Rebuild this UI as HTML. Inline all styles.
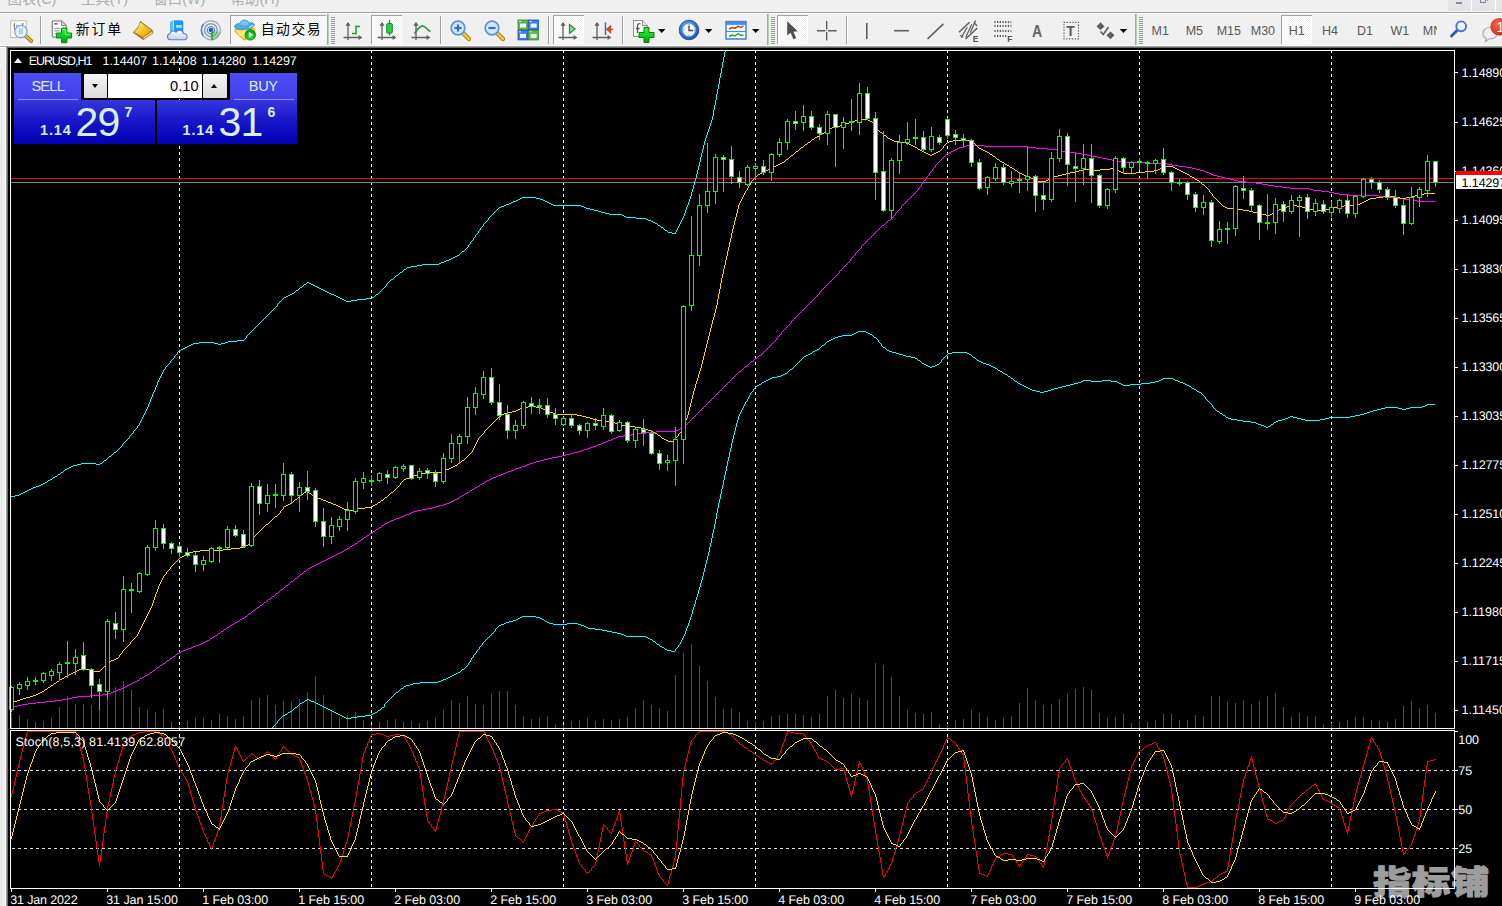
<!DOCTYPE html>
<html lang="zh"><head><meta charset="utf-8"><title>EURUSD,H1</title>
<style>
html,body{margin:0;padding:0}
body{width:1502px;height:906px;overflow:hidden;background:#f0f0f0;position:relative;font-family:"Liberation Sans","Noto Sans CJK SC",sans-serif}
#menu{position:absolute;left:0;top:0;width:1502px;height:12px;overflow:hidden;background:#f0f0f0;color:#adadad;font-size:14.4px;line-height:16px}
#menu span{position:absolute;top:-8.9px;white-space:nowrap}
#menu .wb{position:absolute;top:0;height:11px;background:#e5e5e5}
#mline{position:absolute;left:0;top:12px;width:1502px;height:1px;background:#a0a0a0}
#mline2{position:absolute;left:0;top:13px;width:1502px;height:1px;background:#fff}
#tb{position:absolute;left:0;top:0}
.tl{position:absolute;top:21.6px;font-size:13.8px;line-height:17px;letter-spacing:0.7px;color:#000;white-space:nowrap}
.tf{position:absolute;top:23.8px;font-size:12.5px;line-height:15px;color:#585858;white-space:nowrap;text-align:center;width:40px;margin-left:-20px}
#tp{position:absolute;left:0;top:0}
#tp .tri{position:absolute;left:14px;top:58px;width:0;height:0;border-left:4.6px solid transparent;border-right:4.6px solid transparent;border-bottom:5.2px solid #fff}
#tp .bs{position:absolute;top:73px;height:27px;background:linear-gradient(#4d4df6,#4040ea)}
#tp .bs span{position:absolute;top:4.2px;font-size:14.6px;line-height:18px;color:#d9efe2;letter-spacing:-0.75px;font-weight:300}
#tp .bs i{position:absolute;top:26px;height:1px;background:#8f8ff5}
#tp .vol{position:absolute;left:83px;top:73px;width:145px;height:26px;background:#000}
#tp .vb{position:absolute;top:1px;width:23px;height:24px;background:linear-gradient(#f4f4f4,#dcdcdc);border-radius:1px}
#tp .vb b{position:absolute;left:8px;top:10px;width:0;height:0;border-left:3.5px solid transparent;border-right:3.5px solid transparent}
#tp .vb b.dn{border-top:4px solid #000}
#tp .vb b.up{border-bottom:4px solid #000}
#tp .vf{position:absolute;left:25px;top:1px;width:94px;height:24px;background:#fff;color:#000;font-size:14.6px;line-height:24px;text-align:right;box-sizing:border-box;padding-right:3.5px}
#tp .pr{position:absolute;top:100px;height:44px;background:linear-gradient(#3636de,#1c1ccc 40%,#0a0abf 75%,#0303b3);color:#d9efe2}
#tp .pr span{position:absolute;white-space:nowrap}
#tp .pr .sm{top:22.3px;font-size:14.4px;font-weight:bold;line-height:16px;letter-spacing:0.9px}
#tp .pr .bg{top:-0.3px;font-size:41px;line-height:44px;letter-spacing:-1px}
#tp .pr .su{top:4px;font-size:14px;font-weight:bold;line-height:16px}
</style></head><body>
<div id="menu"><span style="left:7.6px">图表(C)</span><span style="left:81px">工具(T)</span><span style="left:153.4px">窗口(W)</span><span style="left:230.7px">帮助(H)</span>
<div class="wb" style="left:1448px;width:54px;background:#fcfcfc"></div><div class="wb" style="left:1448px;width:23px"><div style="position:absolute;left:8px;top:2px;width:6px;height:2px;background:#7a8eab"></div></div>
<div class="wb" style="left:1472px;width:23px"><div style="position:absolute;left:8px;top:-4px;width:4px;height:5px;border:1.5px solid #7489ab;background:#dfe4ec"></div><div style="position:absolute;left:15px;top:0;width:1px;height:1px;background:#7489ab"></div></div>
<div class="wb" style="left:1496px;width:6px"></div>
</div><div id="mline"></div><div id="mline2"></div>
<svg id="chart" width="1502" height="906" viewBox="0 0 1502 906" style="position:absolute;left:0;top:0" font-family='"Liberation Sans","Noto Sans CJK SC",sans-serif' text-rendering="geometricPrecision">
<defs>
<clipPath id="cm"><rect x="11" y="51" width="1443" height="677"/></clipPath>
<clipPath id="cs"><rect x="11" y="731" width="1443" height="157"/></clipPath>
<clipPath id="ca"><rect x="1455" y="48" width="47" height="858"/></clipPath>
</defs>
<g shape-rendering="crispEdges">
<rect x="5" y="47" width="1" height="859" fill="#fff"/>
<rect x="0" y="47" width="6" height="1" fill="#fff"/>
<rect x="1" y="68" width="1" height="838" fill="#cfe6cf"/>
<rect x="0" y="45" width="1502" height="1" fill="#fbfbfb"/>
<rect x="0" y="46" width="1502" height="1" fill="#a6a6a6"/>
<rect x="6" y="46" width="1496" height="860" fill="#a0a0a0"/>
<rect x="7" y="47" width="1495" height="859" fill="#696969"/>
<rect x="8" y="48" width="1494" height="858" fill="#000"/>
<path d="M179.5 50V889 M371.5 50V889 M563.5 50V889 M755.5 50V889 M947.5 50V889 M1139.5 50V889 M1331.5 50V889" stroke="#fff" stroke-width="1" stroke-dasharray="3 3" fill="none"/>
<path d="M11 178.5H1454" stroke="#ff0000" stroke-width="1"/>
<path d="M11 182.5H1454" stroke="#778899" stroke-width="1"/>
<path d="M11.5 713V728 M19.5 715V728 M27.5 719V728 M35.5 722V728 M43.5 721V728 M51.5 718V728 M59.5 707V728 M67.5 696V728 M75.5 704V728 M83.5 704V728 M91.5 705V728 M99.5 709V728 M107.5 692V728 M115.5 687V728 M123.5 681V728 M131.5 690V728 M139.5 707V728 M147.5 710V728 M155.5 712V728 M163.5 709V728 M171.5 722V728 M179.5 726V728 M187.5 721V728 M195.5 718V728 M203.5 718V728 M211.5 720V728 M219.5 714V728 M227.5 716V728 M235.5 719V728 M243.5 716V728 M251.5 700V728 M259.5 698V728 M267.5 695V728 M275.5 705V728 M283.5 701V728 M291.5 702V728 M299.5 699V728 M307.5 692V728 M315.5 676V728 M323.5 695V728 M331.5 711V728 M339.5 717V728 M347.5 715V728 M355.5 712V728 M363.5 720V728 M371.5 725V728 M379.5 722V728 M387.5 720V728 M395.5 719V728 M403.5 722V728 M411.5 721V728 M419.5 723V728 M427.5 721V728 M435.5 718V728 M443.5 710V728 M451.5 700V728 M459.5 703V728 M467.5 696V728 M475.5 704V728 M483.5 705V728 M491.5 694V728 M499.5 691V728 M507.5 691V728 M515.5 705V728 M523.5 716V728 M531.5 719V728 M539.5 718V728 M547.5 716V728 M555.5 724V728 M563.5 725V728 M571.5 721V728 M579.5 720V728 M587.5 718V728 M595.5 721V728 M603.5 719V728 M611.5 720V728 M619.5 719V728 M627.5 717V728 M635.5 708V728 M643.5 700V728 M651.5 705V728 M659.5 708V728 M667.5 711V728 M675.5 675V728 M683.5 653V728 M691.5 644V728 M699.5 666V728 M707.5 681V728 M715.5 697V728 M723.5 709V728 M731.5 708V728 M739.5 712V728 M747.5 721V728 M755.5 722V728 M763.5 721V728 M771.5 716V728 M779.5 715V728 M787.5 714V728 M795.5 714V728 M803.5 715V728 M811.5 717V728 M819.5 714V728 M827.5 696V728 M835.5 690V728 M843.5 698V728 M851.5 694V728 M859.5 698V728 M867.5 700V728 M875.5 663V728 M883.5 665V728 M891.5 677V728 M899.5 696V728 M907.5 710V728 M915.5 713V728 M923.5 714V728 M931.5 712V728 M939.5 724V728 M947.5 724V728 M955.5 720V728 M963.5 719V728 M971.5 710V728 M979.5 713V728 M987.5 717V728 M995.5 720V728 M1003.5 718V728 M1011.5 716V728 M1019.5 703V728 M1027.5 688V728 M1035.5 700V728 M1043.5 705V728 M1051.5 704V728 M1059.5 699V728 M1067.5 694V728 M1075.5 689V728 M1083.5 687V728 M1091.5 690V728 M1099.5 713V728 M1107.5 718V728 M1115.5 717V728 M1123.5 714V728 M1131.5 723V728 M1139.5 721V728 M1147.5 722V728 M1155.5 720V728 M1163.5 714V728 M1171.5 714V728 M1179.5 720V728 M1187.5 720V728 M1195.5 715V728 M1203.5 716V728 M1211.5 696V728 M1219.5 696V728 M1227.5 702V728 M1235.5 703V728 M1243.5 700V728 M1251.5 704V728 M1259.5 701V728 M1267.5 696V728 M1275.5 693V728 M1283.5 707V728 M1291.5 717V728 M1299.5 713V728 M1307.5 716V728 M1315.5 716V728 M1323.5 724V728 M1331.5 723V728 M1339.5 722V728 M1347.5 720V728 M1355.5 717V728 M1363.5 717V728 M1371.5 720V728 M1379.5 721V728 M1387.5 722V728 M1395.5 719V728 M1403.5 706V728 M1411.5 701V728 M1419.5 708V728 M1427.5 705V728 M1435.5 713V728" stroke="#ff0000" stroke-width="1" fill="none"/>
<g clip-path="url(#cm)" fill="none" stroke-width="1">
<path d="M122.5 444v2M129.5 436v2M133.5 431v2M137.5 426v2M139.5 423v2M140.5 421v2M141.5 419v2M142.5 417v2M143.5 415v2M144.5 413v2M145.5 411v2M146.5 409v2M147.5 407v2M148.5 404v3M149.5 402v2M150.5 399v3M151.5 397v2M152.5 394v3M153.5 392v2M154.5 390v2M155.5 387v3M156.5 385v2M157.5 382v3M158.5 380v2M159.5 378v2M160.5 376v2M161.5 374v2M162.5 372v2M163.5 370v2M165.5 367v2M170.5 361v2M174.5 356v2M177.5 352v2M246.5 336v2M277.5 304v2M386.5 284v2M468.5 245v2M470.5 242v2M473.5 238v2M475.5 235v2M478.5 231v2M480.5 228v2M483.5 224v2M488.5 218v2M675.5 232v2M676.5 230v2M677.5 228v2M678.5 226v2M679.5 224v2M680.5 222v2M681.5 220v2M682.5 218v2M683.5 216v2M684.5 213v3M685.5 210v3M686.5 207v3M687.5 205v2M688.5 202v3M689.5 199v3M690.5 196v3M691.5 192v4M692.5 189v3M693.5 185v4M694.5 181v4M695.5 178v3M696.5 174v4M697.5 170v4M698.5 166v4M699.5 162v4M700.5 157v5M701.5 153v4M702.5 149v4M703.5 145v4M704.5 141v4M705.5 138v3M706.5 135v3M707.5 132v3M708.5 129v3M709.5 126v3M710.5 123v3M711.5 120v3M712.5 116v4M713.5 110v6M714.5 105v5M715.5 100v5M716.5 94v6M717.5 89v5M718.5 84v5M719.5 78v6M720.5 73v5M721.5 68v5M722.5 62v6M723.5 57v5M724.5 52v5M725 51.5h1M522 197.5h14M520 198.5h2M536 198.5h4M518 199.5h2M540 199.5h3M516 200.5h2M543 200.5h2M513 201.5h3M545 201.5h2M511 202.5h2M547 202.5h2M509 203.5h2M549 203.5h2M506 204.5h3M551 204.5h2M504 205.5h2M553 205.5h28M501 206.5h3M581 206.5h3M499 207.5h2M584 207.5h2M498 208.5h1M586 208.5h4M497 209.5h1M590 209.5h4M496 210.5h1M594 210.5h4M495 211.5h1M598 211.5h3M494 212.5h1M601 212.5h4M493 213.5h1M605 213.5h4M492 214.5h1M609 214.5h13M491 215.5h1M622 215.5h2M490 216.5h1M624 216.5h2M489 217.5h1M626 217.5h10M636 218.5h10M646 219.5h2M487 220.5h1M648 220.5h3M486 221.5h1M651 221.5h2M485 222.5h1M653 222.5h2M484 223.5h1M655 223.5h2M657 224.5h1M658 225.5h2M482 226.5h1M660 226.5h1M481 227.5h1M661 227.5h2M663 228.5h1M664 229.5h1M479 230.5h1M665 230.5h2M667 231.5h1M668 232.5h4M477 233.5h1M672 233.5h3M476 234.5h1M474 237.5h1M472 240.5h1M471 241.5h1M469 244.5h1M467 247.5h1M466 248.5h1M465 249.5h1M464 250.5h1M462 251.5h2M461 252.5h1M460 253.5h1M459 254.5h1M457 255.5h2M455 256.5h2M453 257.5h2M451 258.5h2M449 259.5h2M446 260.5h3M444 261.5h2M441 262.5h3M439 263.5h2M422 264.5h17M417 265.5h5M411 266.5h6M407 267.5h4M406 268.5h1M404 269.5h2M403 270.5h1M402 271.5h1M400 272.5h2M399 273.5h1M398 274.5h1M396 275.5h2M395 276.5h1M394 277.5h1M393 278.5h1M391 279.5h2M390 280.5h1M389 281.5h1M307 282.5h2M388 282.5h1M306 283.5h1M309 283.5h2M387 283.5h1M304 284.5h2M311 284.5h2M303 285.5h1M313 285.5h2M302 286.5h1M315 286.5h2M385 286.5h1M300 287.5h2M317 287.5h2M384 287.5h1M299 288.5h1M319 288.5h2M383 288.5h1M298 289.5h1M321 289.5h2M382 289.5h1M296 290.5h2M323 290.5h2M381 290.5h1M295 291.5h1M325 291.5h2M380 291.5h1M294 292.5h1M327 292.5h2M379 292.5h1M292 293.5h2M329 293.5h2M378 293.5h1M290 294.5h2M331 294.5h3M376 294.5h2M288 295.5h2M334 295.5h2M375 295.5h1M286 296.5h2M336 296.5h2M374 296.5h1M284 297.5h2M338 297.5h2M372 297.5h2M283 298.5h1M340 298.5h2M366 298.5h6M282 299.5h1M342 299.5h2M357 299.5h9M281 300.5h1M344 300.5h2M351 300.5h6M280 301.5h1M346 301.5h5M279 302.5h1M278 303.5h1M276 306.5h1M275 307.5h1M274 308.5h1M273 309.5h1M272 310.5h1M271 311.5h1M270 312.5h1M269 313.5h1M268 314.5h1M267 315.5h1M266 316.5h1M265 317.5h1M264 318.5h1M263 319.5h1M262 320.5h1M261 321.5h1M260 322.5h1M259 323.5h1M258 324.5h1M257 325.5h1M256 326.5h1M255 327.5h1M254 328.5h1M253 329.5h1M252 330.5h1M251 331.5h1M250 332.5h1M249 333.5h1M248 334.5h1M247 335.5h1M245 338.5h1M244 339.5h1M237 340.5h7M228 341.5h9M199 342.5h15M225 342.5h3M193 343.5h6M214 343.5h4M221 343.5h4M191 344.5h2M218 344.5h3M189 345.5h2M187 346.5h2M185 347.5h2M183 348.5h2M181 349.5h2M179 350.5h2M178 351.5h1M176 354.5h1M175 355.5h1M173 358.5h1M172 359.5h1M171 360.5h1M169 363.5h1M168 364.5h1M167 365.5h1M166 366.5h1M164 369.5h1M138 425.5h1M136 428.5h1M135 429.5h1M134 430.5h1M132 433.5h1M131 434.5h1M130 435.5h1M128 438.5h1M127 439.5h1M126 440.5h1M125 441.5h1M124 442.5h1M123 443.5h1M121 446.5h1M120 447.5h1M119 448.5h1M118 449.5h1M117 450.5h1M116 451.5h1M114 452.5h2M113 453.5h1M112 454.5h1M111 455.5h1M109 456.5h2M108 457.5h1M107 458.5h1M106 459.5h1M104 460.5h2M103 461.5h1M102 462.5h1M81 463.5h15M100 463.5h2M77 464.5h4M96 464.5h4M73 465.5h4M71 466.5h2M69 467.5h2M67 468.5h2M65 469.5h2M64 470.5h1M63 471.5h1M61 472.5h2M60 473.5h1M58 474.5h2M57 475.5h1M55 476.5h2M53 477.5h2M52 478.5h1M50 479.5h2M48 480.5h2M47 481.5h1M45 482.5h2M43 483.5h2M41 484.5h2M39 485.5h2M36 486.5h3M33 487.5h3M31 488.5h2M29 489.5h2M27 490.5h2M25 491.5h2M23 492.5h2M21 493.5h2M19 494.5h2M15 495.5h4M11 496.5h4M277.5 721v2M384.5 704v3M468.5 663v2M470.5 660v2M471.5 658v2M473.5 655v2M476.5 651v2M479.5 647v2M482.5 643v2M495.5 629v2M675.5 649v2M678.5 645v2M680.5 642v2M681.5 640v2M682.5 638v2M683.5 636v2M684.5 634v2M685.5 631v3M686.5 628v3M687.5 626v2M688.5 623v3M689.5 620v3M690.5 617v3M691.5 614v3M692.5 610v4M693.5 607v3M694.5 604v3M695.5 600v4M696.5 597v3M697.5 594v3M698.5 590v4M699.5 587v3M700.5 583v4M701.5 580v3M702.5 576v4M703.5 572v4M704.5 568v4M705.5 564v4M706.5 560v4M707.5 556v4M708.5 552v4M709.5 547v5M710.5 543v4M711.5 538v5M712.5 533v5M713.5 529v4M714.5 524v5M715.5 519v5M716.5 513v6M717.5 508v5M718.5 503v5M719.5 499v4M720.5 494v5M721.5 489v5M722.5 485v4M723.5 480v5M724.5 475v5M725.5 471v4M726.5 466v5M727.5 461v5M728.5 457v4M729.5 452v5M730.5 448v4M731.5 443v5M732.5 439v4M733.5 435v4M734.5 431v4M735.5 427v4M736.5 423v4M737.5 420v3M738.5 416v4M739.5 414v2M740.5 412v2M741.5 410v2M742.5 408v2M743.5 406v2M744.5 404v2M745.5 402v2M747.5 399v2M748.5 397v2M749.5 395v2M750.5 393v2M753.5 389v2M878.5 340v2M881.5 344v2M941.5 360v2M1205.5 397v2M1212.5 405v2M858 331.5h8M856 332.5h2M866 332.5h2M854 333.5h2M868 333.5h2M852 334.5h2M870 334.5h2M842 335.5h10M872 335.5h1M838 336.5h4M873 336.5h1M835 337.5h3M874 337.5h2M833 338.5h2M876 338.5h1M831 339.5h2M877 339.5h1M829 340.5h2M827 341.5h2M826 342.5h1M879 342.5h1M825 343.5h1M880 343.5h1M824 344.5h1M822 345.5h2M821 346.5h1M882 346.5h1M820 347.5h1M883 347.5h2M819 348.5h1M885 348.5h1M817 349.5h2M886 349.5h1M815 350.5h2M887 350.5h2M813 351.5h2M889 351.5h3M812 352.5h1M892 352.5h4M952 352.5h15M810 353.5h2M896 353.5h3M948 353.5h4M967 353.5h2M808 354.5h2M899 354.5h4M947 354.5h1M969 354.5h2M806 355.5h2M903 355.5h3M946 355.5h1M971 355.5h1M804 356.5h2M906 356.5h5M945 356.5h1M972 356.5h1M803 357.5h1M911 357.5h4M944 357.5h1M973 357.5h2M802 358.5h1M915 358.5h2M943 358.5h1M975 358.5h1M801 359.5h1M917 359.5h1M942 359.5h1M976 359.5h1M800 360.5h1M918 360.5h2M977 360.5h2M799 361.5h1M920 361.5h1M979 361.5h2M798 362.5h1M921 362.5h1M940 362.5h1M981 362.5h2M797 363.5h1M922 363.5h2M939 363.5h1M983 363.5h3M796 364.5h1M924 364.5h2M937 364.5h2M986 364.5h3M795 365.5h1M926 365.5h2M935 365.5h2M989 365.5h2M794 366.5h1M928 366.5h2M932 366.5h3M991 366.5h2M793 367.5h1M930 367.5h2M993 367.5h2M792 368.5h1M995 368.5h2M790 369.5h2M997 369.5h1M789 370.5h1M998 370.5h2M788 371.5h1M1000 371.5h2M787 372.5h1M1002 372.5h1M785 373.5h2M1003 373.5h2M783 374.5h2M1005 374.5h2M781 375.5h2M1007 375.5h1M777 376.5h4M1008 376.5h2M772 377.5h5M1010 377.5h1M770 378.5h2M1011 378.5h2M1163 378.5h10M768 379.5h2M1013 379.5h1M1161 379.5h2M1173 379.5h2M766 380.5h2M1014 380.5h1M1083 380.5h8M1102 380.5h9M1159 380.5h2M1175 380.5h3M764 381.5h2M1015 381.5h2M1081 381.5h2M1091 381.5h11M1111 381.5h6M1155 381.5h4M1178 381.5h2M762 382.5h2M1017 382.5h1M1078 382.5h3M1117 382.5h2M1150 382.5h5M1180 382.5h3M761 383.5h1M1018 383.5h2M1074 383.5h4M1119 383.5h2M1141 383.5h9M1183 383.5h2M759 384.5h2M1020 384.5h2M1070 384.5h4M1121 384.5h2M1130 384.5h11M1185 384.5h2M757 385.5h2M1022 385.5h2M1066 385.5h4M1123 385.5h7M1187 385.5h2M756 386.5h1M1024 386.5h2M1062 386.5h4M1189 386.5h2M755 387.5h1M1026 387.5h2M1058 387.5h4M1191 387.5h1M754 388.5h1M1028 388.5h2M1054 388.5h4M1192 388.5h2M1030 389.5h2M1051 389.5h3M1194 389.5h2M1032 390.5h4M1048 390.5h3M1196 390.5h1M752 391.5h1M1036 391.5h4M1044 391.5h4M1197 391.5h2M751 392.5h1M1040 392.5h4M1199 392.5h2M1201 393.5h1M1202 394.5h1M1203 395.5h1M1204 396.5h1M1206 399.5h1M1207 400.5h1M746 401.5h1M1208 401.5h1M1209 402.5h1M1210 403.5h1M1211 404.5h1M1427 404.5h8M1425 405.5h2M1422 406.5h3M1213 407.5h1M1385 407.5h13M1410 407.5h12M1214 408.5h1M1381 408.5h4M1398 408.5h4M1406 408.5h4M1215 409.5h1M1377 409.5h4M1402 409.5h4M1216 410.5h1M1373 410.5h4M1217 411.5h2M1370 411.5h3M1219 412.5h1M1367 412.5h3M1220 413.5h2M1364 413.5h3M1222 414.5h1M1360 414.5h4M1223 415.5h2M1355 415.5h5M1225 416.5h1M1290 416.5h3M1350 416.5h5M1226 417.5h2M1288 417.5h2M1293 417.5h4M1329 417.5h21M1228 418.5h3M1285 418.5h3M1297 418.5h4M1325 418.5h4M1231 419.5h6M1282 419.5h3M1301 419.5h4M1320 419.5h5M1237 420.5h6M1278 420.5h4M1305 420.5h15M1243 421.5h8M1276 421.5h2M1251 422.5h5M1274 422.5h2M1256 423.5h2M1273 423.5h1M1258 424.5h3M1271 424.5h2M1261 425.5h3M1270 425.5h1M1264 426.5h2M1268 426.5h2M1266 427.5h2M522 616.5h14M520 617.5h2M536 617.5h4M518 618.5h2M540 618.5h2M516 619.5h2M542 619.5h2M513 620.5h3M544 620.5h1M509 621.5h4M545 621.5h2M506 622.5h3M547 622.5h2M504 623.5h2M549 623.5h4M567 623.5h11M501 624.5h3M553 624.5h14M578 624.5h3M499 625.5h2M581 625.5h3M498 626.5h1M584 626.5h2M497 627.5h1M586 627.5h2M496 628.5h1M588 628.5h7M595 629.5h7M602 630.5h5M494 631.5h1M607 631.5h5M493 632.5h1M612 632.5h5M492 633.5h1M617 633.5h4M491 634.5h1M621 634.5h3M490 635.5h1M624 635.5h2M489 636.5h1M626 636.5h20M488 637.5h1M646 637.5h2M487 638.5h1M648 638.5h2M486 639.5h1M650 639.5h2M485 640.5h1M652 640.5h1M484 641.5h1M653 641.5h2M483 642.5h1M655 642.5h1M656 643.5h1M657 644.5h2M679 644.5h1M481 645.5h1M659 645.5h1M480 646.5h1M660 646.5h2M662 647.5h2M677 647.5h1M664 648.5h1M676 648.5h1M478 649.5h1M665 649.5h2M477 650.5h1M667 650.5h4M671 651.5h4M475 653.5h1M474 654.5h1M472 657.5h1M469 662.5h1M467 665.5h1M466 666.5h1M465 667.5h1M464 668.5h1M462 669.5h2M461 670.5h1M460 671.5h1M458 672.5h2M456 673.5h2M454 674.5h2M452 675.5h2M450 676.5h2M448 677.5h2M446 678.5h2M443 679.5h3M441 680.5h2M438 681.5h3M420 682.5h18M413 683.5h7M410 684.5h3M406 685.5h4M404 686.5h2M403 687.5h1M401 688.5h2M400 689.5h1M399 690.5h1M398 691.5h1M396 692.5h2M395 693.5h1M394 694.5h1M393 695.5h1M392 696.5h1M391 697.5h1M390 698.5h1M307 699.5h2M389 699.5h1M305 700.5h2M309 700.5h2M388 700.5h1M304 701.5h1M311 701.5h3M387 701.5h1M302 702.5h2M314 702.5h2M386 702.5h1M300 703.5h2M316 703.5h2M385 703.5h1M299 704.5h1M318 704.5h2M298 705.5h1M320 705.5h2M297 706.5h1M322 706.5h2M295 707.5h2M324 707.5h2M382 707.5h2M294 708.5h1M326 708.5h2M381 708.5h1M293 709.5h1M328 709.5h2M380 709.5h1M292 710.5h1M330 710.5h2M378 710.5h2M290 711.5h2M332 711.5h2M377 711.5h1M288 712.5h2M334 712.5h2M375 712.5h2M287 713.5h1M336 713.5h2M373 713.5h2M285 714.5h2M338 714.5h2M371 714.5h2M283 715.5h2M340 715.5h2M365 715.5h6M282 716.5h1M342 716.5h2M357 716.5h8M281 717.5h1M344 717.5h2M351 717.5h6M280 718.5h1M346 718.5h5M279 719.5h1M278 720.5h1M276 723.5h1M275 724.5h1M274 725.5h1M273 726.5h1M272 727.5h1" stroke="#00ffff"/>
<path d="M776.5 338v2M781.5 332v2M791.5 321v2M819.5 292v2M839.5 271v2M850.5 259v2M855.5 253v2M861.5 246v2M895.5 213v2M901.5 206v2M918.5 188v2M921.5 184v2M923.5 181v2M926.5 177v2M929.5 173v2M932.5 169v2M935.5 165v2M966 145.5h18M963 146.5h3M984 146.5h44M959 147.5h4M1028 147.5h8M957 148.5h2M1036 148.5h11M955 149.5h2M1047 149.5h10M953 150.5h2M1057 150.5h5M951 151.5h2M1062 151.5h6M949 152.5h2M1068 152.5h8M947 153.5h2M1076 153.5h6M946 154.5h1M1082 154.5h5M945 155.5h1M1087 155.5h5M944 156.5h1M1092 156.5h5M943 157.5h1M1097 157.5h5M942 158.5h1M1102 158.5h5M941 159.5h1M1107 159.5h5M940 160.5h1M1112 160.5h5M939 161.5h1M1117 161.5h8M938 162.5h1M1125 162.5h22M937 163.5h1M1147 163.5h20M936 164.5h1M1167 164.5h5M1172 165.5h6M1178 166.5h8M934 167.5h1M1186 167.5h6M933 168.5h1M1192 168.5h4M1196 169.5h4M1200 170.5h4M931 171.5h1M1204 171.5h2M930 172.5h1M1206 172.5h3M1209 173.5h2M1211 174.5h2M928 175.5h1M1213 175.5h4M927 176.5h1M1217 176.5h4M1221 177.5h4M1225 178.5h5M925 179.5h1M1230 179.5h4M924 180.5h1M1234 180.5h4M1238 181.5h8M1246 182.5h10M922 183.5h1M1256 183.5h6M1262 184.5h6M1268 185.5h6M920 186.5h1M1274 186.5h8M919 187.5h1M1282 187.5h8M1290 188.5h19M1309 189.5h4M917 190.5h1M1313 190.5h8M916 191.5h1M1321 191.5h8M915 192.5h1M1329 192.5h5M914 193.5h1M1334 193.5h5M913 194.5h1M1339 194.5h10M912 195.5h1M1349 195.5h30M911 196.5h1M1379 196.5h11M910 197.5h1M1390 197.5h6M909 198.5h1M1396 198.5h7M908 199.5h1M1403 199.5h6M907 200.5h1M1409 200.5h8M906 201.5h1M1417 201.5h18M905 202.5h1M904 203.5h1M903 204.5h1M902 205.5h1M900 208.5h1M899 209.5h1M898 210.5h1M897 211.5h1M896 212.5h1M894 215.5h1M893 216.5h1M892 217.5h1M891 218.5h1M890 219.5h1M888 220.5h2M887 221.5h1M886 222.5h1M885 223.5h1M884 224.5h1M882 225.5h2M881 226.5h1M880 227.5h1M879 228.5h1M878 229.5h1M877 230.5h1M876 231.5h1M875 232.5h1M874 233.5h1M873 234.5h1M872 235.5h1M871 236.5h1M870 237.5h1M869 238.5h1M868 239.5h1M867 240.5h1M866 241.5h1M865 242.5h1M864 243.5h1M863 244.5h1M862 245.5h1M860 248.5h1M859 249.5h1M858 250.5h1M857 251.5h1M856 252.5h1M854 255.5h1M853 256.5h1M852 257.5h1M851 258.5h1M849 261.5h1M848 262.5h1M847 263.5h1M846 264.5h1M845 265.5h1M844 266.5h1M843 267.5h1M842 268.5h1M841 269.5h1M840 270.5h1M838 273.5h1M837 274.5h1M836 275.5h1M835 276.5h1M834 277.5h1M833 278.5h1M832 279.5h1M831 280.5h1M830 281.5h1M829 282.5h1M828 283.5h1M827 284.5h1M826 285.5h1M825 286.5h1M824 287.5h1M823 288.5h1M822 289.5h1M821 290.5h1M820 291.5h1M818 294.5h1M817 295.5h1M816 296.5h1M815 297.5h1M814 298.5h1M813 299.5h1M812 300.5h1M811 301.5h1M810 302.5h1M809 303.5h1M808 304.5h1M807 305.5h1M806 306.5h1M805 307.5h1M804 308.5h1M803 309.5h1M802 310.5h1M801 311.5h1M800 312.5h1M799 313.5h1M798 314.5h1M797 315.5h1M796 316.5h1M795 317.5h1M794 318.5h1M793 319.5h1M792 320.5h1M790 323.5h1M789 324.5h1M788 325.5h1M787 326.5h1M786 327.5h1M785 328.5h1M784 329.5h1M783 330.5h1M782 331.5h1M780 334.5h1M779 335.5h1M778 336.5h1M777 337.5h1M775 340.5h1M774 341.5h1M773 342.5h1M772 343.5h1M771 344.5h1M770 345.5h1M769 346.5h1M768 347.5h1M767 348.5h1M766 349.5h1M765 350.5h1M764 351.5h1M763 352.5h1M762 353.5h1M761 354.5h1M759 355.5h2M758 356.5h1M757 357.5h1M755 358.5h2M754 359.5h1M753 360.5h1M751 361.5h2M750 362.5h1M749 363.5h1M748 364.5h1M747 365.5h1M745 366.5h2M744 367.5h1M743 368.5h1M742 369.5h1M741 370.5h1M739 371.5h2M738 372.5h1M737 373.5h1M736 374.5h1M735 375.5h1M734 376.5h1M733 377.5h1M732 378.5h1M731 379.5h1M730 380.5h1M729 381.5h1M728 382.5h1M727 383.5h1M726 384.5h1M725 385.5h1M724 386.5h1M723 387.5h1M722 388.5h1M721 389.5h1M720 390.5h1M719 391.5h1M718 392.5h1M717 393.5h1M716 394.5h1M715 395.5h1M714 396.5h1M713 397.5h1M712 398.5h1M711 399.5h1M710 400.5h1M709 401.5h1M708 402.5h1M707 403.5h1M706 404.5h1M705 405.5h1M704 406.5h1M703 407.5h1M702 408.5h1M701 409.5h1M700 410.5h1M699 411.5h1M698 412.5h1M697 413.5h1M696 414.5h1M695 415.5h1M694 416.5h1M693 417.5h1M692 418.5h1M691 419.5h1M690 420.5h1M689 421.5h1M688 422.5h1M687 423.5h1M685 424.5h2M684 425.5h1M683 426.5h1M682 427.5h1M680 428.5h2M678 429.5h2M676 430.5h2M656 431.5h20M646 432.5h10M638 433.5h8M631 434.5h7M623 435.5h8M618 436.5h5M616 437.5h2M613 438.5h3M611 439.5h2M608 440.5h3M606 441.5h2M603 442.5h3M601 443.5h2M598 444.5h3M596 445.5h2M593 446.5h3M590 447.5h3M587 448.5h3M584 449.5h3M581 450.5h3M578 451.5h3M574 452.5h4M570 453.5h4M566 454.5h4M562 455.5h4M557 456.5h5M552 457.5h5M548 458.5h4M544 459.5h4M540 460.5h4M536 461.5h4M533 462.5h3M530 463.5h3M527 464.5h3M525 465.5h2M522 466.5h3M519 467.5h3M516 468.5h3M514 469.5h2M511 470.5h3M508 471.5h3M506 472.5h2M503 473.5h3M501 474.5h2M498 475.5h3M496 476.5h2M493 477.5h3M491 478.5h2M489 479.5h2M487 480.5h2M485 481.5h2M484 482.5h1M482 483.5h2M480 484.5h2M479 485.5h1M477 486.5h2M475 487.5h2M474 488.5h1M472 489.5h2M470 490.5h2M469 491.5h1M467 492.5h2M465 493.5h2M464 494.5h1M462 495.5h2M460 496.5h2M459 497.5h1M457 498.5h2M455 499.5h2M453 500.5h2M451 501.5h2M449 502.5h2M446 503.5h3M443 504.5h3M439 505.5h4M436 506.5h3M432 507.5h4M427 508.5h5M422 509.5h5M417 510.5h5M413 511.5h4M411 512.5h2M409 513.5h2M406 514.5h3M404 515.5h2M401 516.5h3M399 517.5h2M396 518.5h3M394 519.5h2M391 520.5h3M389 521.5h2M387 522.5h2M385 523.5h2M384 524.5h1M382 525.5h2M381 526.5h1M379 527.5h2M378 528.5h1M376 529.5h2M375 530.5h1M373 531.5h2M372 532.5h1M370 533.5h2M369 534.5h1M367 535.5h2M366 536.5h1M364 537.5h2M363 538.5h1M361 539.5h2M360 540.5h1M358 541.5h2M357 542.5h1M355 543.5h2M354 544.5h1M352 545.5h2M350 546.5h2M349 547.5h1M347 548.5h2M345 549.5h2M344 550.5h1M342 551.5h2M340 552.5h2M338 553.5h2M336 554.5h2M334 555.5h2M332 556.5h2M330 557.5h2M328 558.5h2M326 559.5h2M324 560.5h2M322 561.5h2M320 562.5h2M318 563.5h2M316 564.5h2M314 565.5h2M312 566.5h2M310 567.5h2M308 568.5h2M307 569.5h1M306 570.5h1M304 571.5h2M303 572.5h1M302 573.5h1M300 574.5h2M299 575.5h1M298 576.5h1M297 577.5h1M295 578.5h2M294 579.5h1M293 580.5h1M291 581.5h2M290 582.5h1M289 583.5h1M288 584.5h1M286 585.5h2M285 586.5h1M284 587.5h1M283 588.5h1M281 589.5h2M280 590.5h1M279 591.5h1M278 592.5h1M276 593.5h2M275 594.5h1M274 595.5h1M272 596.5h2M271 597.5h1M270 598.5h1M268 599.5h2M267 600.5h1M266 601.5h1M264 602.5h2M263 603.5h1M262 604.5h1M260 605.5h2M259 606.5h1M257 607.5h2M256 608.5h1M255 609.5h1M253 610.5h2M252 611.5h1M251 612.5h1M249 613.5h2M248 614.5h1M247 615.5h1M245 616.5h2M244 617.5h1M242 618.5h2M240 619.5h2M239 620.5h1M237 621.5h2M235 622.5h2M234 623.5h1M232 624.5h2M230 625.5h2M229 626.5h1M227 627.5h2M226 628.5h1M224 629.5h2M223 630.5h1M221 631.5h2M220 632.5h1M218 633.5h2M217 634.5h1M215 635.5h2M214 636.5h1M212 637.5h2M210 638.5h2M209 639.5h1M207 640.5h2M205 641.5h2M203 642.5h2M201 643.5h2M199 644.5h2M196 645.5h3M193 646.5h3M191 647.5h2M188 648.5h3M186 649.5h2M183 650.5h3M181 651.5h2M179 652.5h2M177 653.5h2M176 654.5h1M175 655.5h1M173 656.5h2M172 657.5h1M170 658.5h2M169 659.5h1M167 660.5h2M166 661.5h1M165 662.5h1M163 663.5h2M162 664.5h1M160 665.5h2M159 666.5h1M157 667.5h2M156 668.5h1M155 669.5h1M153 670.5h2M152 671.5h1M150 672.5h2M149 673.5h1M147 674.5h2M145 675.5h2M144 676.5h1M142 677.5h2M140 678.5h2M139 679.5h1M137 680.5h2M135 681.5h2M133 682.5h2M131 683.5h2M129 684.5h2M127 685.5h2M125 686.5h2M123 687.5h2M121 688.5h2M118 689.5h3M116 690.5h2M113 691.5h3M111 692.5h2M107 693.5h4M102 694.5h5M90 695.5h12M77 696.5h13M72 697.5h5M67 698.5h5M62 699.5h5M55 700.5h7M45 701.5h10M36 702.5h9M28 703.5h8M22 704.5h6M18 705.5h4M13 706.5h5M11 707.5h2" stroke="#ff00ff"/>
<path d="M119.5 655v2M122.5 651v2M130.5 642v2M137.5 634v2M138.5 632v2M139.5 630v2M140.5 628v2M141.5 626v2M142.5 624v2M143.5 622v2M144.5 620v2M145.5 618v2M146.5 616v2M147.5 614v2M148.5 612v2M149.5 610v2M150.5 608v2M151.5 606v2M152.5 603v3M153.5 600v3M154.5 597v3M155.5 594v3M156.5 592v2M157.5 589v3M158.5 586v3M159.5 584v2M160.5 582v2M161.5 580v2M162.5 578v2M163.5 576v2M166.5 572v2M170.5 567v2M250.5 541v2M253.5 537v2M280.5 511v2M283.5 507v2M400.5 483v2M472.5 450v2M473.5 448v2M474.5 446v2M475.5 444v2M476.5 442v2M477.5 440v2M478.5 438v2M484.5 431v2M675.5 438v2M678.5 434v2M681.5 430v2M682.5 428v2M683.5 426v2M684.5 423v3M685.5 420v3M686.5 418v2M687.5 415v3M688.5 411v4M689.5 407v4M690.5 403v4M691.5 399v4M692.5 395v4M693.5 391v4M694.5 388v3M695.5 384v4M696.5 381v3M697.5 378v3M698.5 374v4M699.5 371v3M700.5 368v3M701.5 364v4M702.5 360v4M703.5 356v4M704.5 352v4M705.5 348v4M706.5 344v4M707.5 340v4M708.5 336v4M709.5 332v4M710.5 328v4M711.5 324v4M712.5 320v4M713.5 317v3M714.5 313v4M715.5 309v4M716.5 305v4M717.5 299v6M718.5 294v5M719.5 289v5M720.5 283v6M721.5 278v5M722.5 274v4M723.5 269v5M724.5 265v4M725.5 260v5M726.5 256v4M727.5 251v5M728.5 247v4M729.5 242v5M730.5 238v4M731.5 233v5M732.5 229v4M733.5 225v4M734.5 221v4M735.5 217v4M736.5 213v4M737.5 209v4M738.5 205v4M739.5 203v2M740.5 201v2M741.5 199v2M742.5 197v2M743.5 195v2M744.5 193v2M745.5 191v2M747.5 188v2M748.5 186v2M750.5 183v2M751.5 181v2M874.5 124v2M877.5 128v2M943.5 146v2M1209.5 190v2M1212.5 194v2M859 119.5h9M855 120.5h4M868 120.5h2M851 121.5h4M870 121.5h2M849 122.5h2M872 122.5h1M846 123.5h3M873 123.5h1M844 124.5h2M840 125.5h4M835 126.5h5M875 126.5h1M832 127.5h3M876 127.5h1M830 128.5h2M829 129.5h1M827 130.5h2M878 130.5h1M825 131.5h2M879 131.5h1M824 132.5h1M880 132.5h2M822 133.5h2M882 133.5h1M820 134.5h2M883 134.5h1M819 135.5h1M884 135.5h2M817 136.5h2M886 136.5h1M815 137.5h2M887 137.5h1M814 138.5h1M888 138.5h2M812 139.5h2M890 139.5h2M811 140.5h1M892 140.5h2M953 140.5h16M810 141.5h1M894 141.5h6M949 141.5h4M969 141.5h4M808 142.5h2M900 142.5h6M947 142.5h2M973 142.5h1M807 143.5h1M906 143.5h3M946 143.5h1M974 143.5h1M805 144.5h2M909 144.5h2M945 144.5h1M975 144.5h1M804 145.5h1M911 145.5h2M944 145.5h1M976 145.5h1M803 146.5h1M913 146.5h2M977 146.5h1M801 147.5h2M915 147.5h2M978 147.5h1M800 148.5h1M917 148.5h1M942 148.5h1M979 148.5h2M799 149.5h1M918 149.5h2M941 149.5h1M981 149.5h2M798 150.5h1M920 150.5h2M940 150.5h1M983 150.5h2M796 151.5h2M922 151.5h2M938 151.5h2M985 151.5h2M795 152.5h1M924 152.5h2M936 152.5h2M987 152.5h2M794 153.5h1M926 153.5h2M934 153.5h2M989 153.5h1M793 154.5h1M928 154.5h2M932 154.5h2M990 154.5h2M791 155.5h2M930 155.5h2M992 155.5h1M790 156.5h1M993 156.5h2M789 157.5h1M995 157.5h1M788 158.5h1M996 158.5h1M786 159.5h2M997 159.5h2M785 160.5h1M999 160.5h1M784 161.5h1M1000 161.5h2M782 162.5h2M1002 162.5h2M780 163.5h2M1004 163.5h1M778 164.5h2M1005 164.5h2M776 165.5h2M1007 165.5h2M774 166.5h2M1009 166.5h1M1164 166.5h9M772 167.5h2M1010 167.5h2M1162 167.5h2M1173 167.5h2M770 168.5h2M1012 168.5h2M1110 168.5h5M1160 168.5h2M1175 168.5h2M768 169.5h2M1014 169.5h1M1083 169.5h7M1100 169.5h10M1115 169.5h2M1158 169.5h2M1177 169.5h2M766 170.5h2M1015 170.5h2M1079 170.5h4M1090 170.5h10M1117 170.5h2M1154 170.5h4M1179 170.5h2M764 171.5h2M1017 171.5h1M1075 171.5h4M1119 171.5h2M1145 171.5h9M1181 171.5h2M762 172.5h2M1018 172.5h2M1070 172.5h5M1121 172.5h2M1136 172.5h9M1183 172.5h2M760 173.5h2M1020 173.5h2M1066 173.5h4M1123 173.5h13M1185 173.5h2M758 174.5h2M1022 174.5h2M1062 174.5h4M1187 174.5h2M757 175.5h1M1024 175.5h2M1058 175.5h4M1189 175.5h1M756 176.5h1M1026 176.5h3M1054 176.5h4M1190 176.5h2M755 177.5h1M1029 177.5h2M1052 177.5h2M1192 177.5h2M754 178.5h1M1031 178.5h3M1050 178.5h2M1194 178.5h1M753 179.5h1M1034 179.5h2M1048 179.5h2M1195 179.5h2M752 180.5h1M1036 180.5h2M1046 180.5h2M1197 180.5h2M1038 181.5h8M1199 181.5h1M1200 182.5h1M1201 183.5h1M1202 184.5h2M749 185.5h1M1204 185.5h1M1205 186.5h1M1206 187.5h1M1207 188.5h1M1208 189.5h1M746 190.5h1M1210 192.5h1M1211 193.5h1M1424 193.5h11M1419 194.5h5M1415 195.5h4M1213 196.5h1M1383 196.5h13M1411 196.5h4M1214 197.5h1M1376 197.5h7M1396 197.5h4M1406 197.5h5M1215 198.5h1M1370 198.5h6M1400 198.5h6M1216 199.5h1M1368 199.5h2M1217 200.5h1M1366 200.5h2M1218 201.5h1M1364 201.5h2M1219 202.5h1M1362 202.5h2M1220 203.5h1M1360 203.5h2M1221 204.5h1M1358 204.5h2M1222 205.5h1M1292 205.5h5M1344 205.5h14M1223 206.5h2M1287 206.5h5M1297 206.5h5M1338 206.5h6M1225 207.5h2M1283 207.5h4M1302 207.5h4M1333 207.5h5M1227 208.5h6M1281 208.5h2M1306 208.5h4M1330 208.5h3M1233 209.5h10M1279 209.5h2M1310 209.5h3M1326 209.5h4M1243 210.5h6M1277 210.5h2M1313 210.5h13M1249 211.5h4M1275 211.5h2M1253 212.5h4M1273 212.5h2M1257 213.5h4M1272 213.5h1M1261 214.5h5M1270 214.5h2M1266 215.5h4M528 406.5h8M522 407.5h6M536 407.5h5M520 408.5h2M541 408.5h2M518 409.5h2M543 409.5h2M516 410.5h2M545 410.5h2M512 411.5h4M547 411.5h2M507 412.5h5M549 412.5h4M504 413.5h3M553 413.5h3M502 414.5h2M556 414.5h21M501 415.5h1M577 415.5h5M500 416.5h1M582 416.5h4M498 417.5h2M586 417.5h4M497 418.5h1M590 418.5h3M496 419.5h1M593 419.5h4M495 420.5h1M597 420.5h5M494 421.5h1M602 421.5h8M493 422.5h1M610 422.5h5M492 423.5h1M615 423.5h2M491 424.5h1M617 424.5h2M490 425.5h1M619 425.5h6M489 426.5h1M625 426.5h10M488 427.5h1M635 427.5h6M487 428.5h1M641 428.5h4M486 429.5h1M645 429.5h3M485 430.5h1M648 430.5h3M651 431.5h2M653 432.5h2M680 432.5h1M483 433.5h1M655 433.5h2M679 433.5h1M482 434.5h1M657 434.5h1M481 435.5h1M658 435.5h2M480 436.5h1M660 436.5h1M677 436.5h1M479 437.5h1M661 437.5h1M676 437.5h1M662 438.5h2M664 439.5h2M666 440.5h2M674 440.5h1M668 441.5h6M471 452.5h1M470 453.5h1M469 454.5h1M468 455.5h1M467 456.5h1M466 457.5h1M465 458.5h1M464 459.5h1M462 460.5h2M461 461.5h1M460 462.5h1M458 463.5h2M457 464.5h1M455 465.5h2M453 466.5h2M451 467.5h2M449 468.5h2M446 469.5h3M444 470.5h2M441 471.5h3M427 472.5h14M422 473.5h5M418 474.5h4M414 475.5h4M411 476.5h3M409 477.5h2M406 478.5h3M404 479.5h2M403 480.5h1M402 481.5h1M401 482.5h1M399 485.5h1M398 486.5h1M397 487.5h1M396 488.5h1M395 489.5h1M394 490.5h1M306 491.5h1M393 491.5h1M304 492.5h2M307 492.5h2M391 492.5h2M303 493.5h1M309 493.5h2M390 493.5h1M302 494.5h1M311 494.5h1M389 494.5h1M300 495.5h2M312 495.5h2M388 495.5h1M299 496.5h1M314 496.5h2M387 496.5h1M298 497.5h1M316 497.5h2M385 497.5h2M297 498.5h1M318 498.5h3M384 498.5h1M295 499.5h2M321 499.5h2M383 499.5h1M294 500.5h1M323 500.5h3M381 500.5h2M293 501.5h1M326 501.5h2M380 501.5h1M292 502.5h1M328 502.5h3M378 502.5h2M290 503.5h2M331 503.5h2M377 503.5h1M288 504.5h2M333 504.5h3M375 504.5h2M286 505.5h2M336 505.5h2M373 505.5h2M284 506.5h2M338 506.5h2M371 506.5h2M340 507.5h2M365 507.5h6M342 508.5h2M358 508.5h7M282 509.5h1M344 509.5h5M354 509.5h4M281 510.5h1M349 510.5h5M279 513.5h1M278 514.5h1M277 515.5h1M275 516.5h2M274 517.5h1M273 518.5h1M272 519.5h1M271 520.5h1M270 521.5h1M269 522.5h1M268 523.5h1M266 524.5h2M265 525.5h1M264 526.5h1M263 527.5h1M262 528.5h1M261 529.5h1M260 530.5h1M259 531.5h1M258 532.5h1M257 533.5h1M256 534.5h1M255 535.5h1M254 536.5h1M252 539.5h1M251 540.5h1M249 543.5h1M248 544.5h1M246 545.5h2M245 546.5h1M240 547.5h5M231 548.5h9M223 549.5h8M200 550.5h23M193 551.5h7M189 552.5h4M187 553.5h2M185 554.5h2M184 555.5h1M182 556.5h2M180 557.5h2M179 558.5h1M178 559.5h1M177 560.5h1M176 561.5h1M175 562.5h1M174 563.5h1M173 564.5h1M172 565.5h1M171 566.5h1M169 569.5h1M168 570.5h1M167 571.5h1M165 574.5h1M164 575.5h1M136 636.5h1M135 637.5h1M134 638.5h1M133 639.5h1M132 640.5h1M131 641.5h1M129 644.5h1M128 645.5h1M127 646.5h1M126 647.5h1M125 648.5h1M124 649.5h1M123 650.5h1M121 653.5h1M120 654.5h1M118 657.5h1M116 658.5h2M114 659.5h2M111 660.5h3M109 661.5h2M108 662.5h1M107 663.5h1M106 664.5h1M105 665.5h1M104 666.5h1M103 667.5h1M102 668.5h1M79 669.5h10M101 669.5h1M77 670.5h2M89 670.5h4M100 670.5h1M75 671.5h2M93 671.5h7M73 672.5h2M71 673.5h2M69 674.5h2M67 675.5h2M65 676.5h2M64 677.5h1M62 678.5h2M60 679.5h2M59 680.5h1M57 681.5h2M56 682.5h1M54 683.5h2M53 684.5h1M51 685.5h2M50 686.5h1M48 687.5h2M47 688.5h1M45 689.5h2M44 690.5h1M42 691.5h2M40 692.5h2M38 693.5h2M36 694.5h2M33 695.5h3M30 696.5h3M26 697.5h4M23 698.5h3M20 699.5h3M17 700.5h3M14 701.5h3M12 702.5h2" stroke="#ffd700"/>
</g>
<path d="M11.5 686V712 M19.5 682V695 M27.5 677V690 M35.5 677V685 M43.5 672V683 M51.5 669V681 M59.5 662V681 M67.5 641V678 M75.5 649V675 M83.5 642V671 M91.5 668V698 M99.5 679V710 M107.5 619V699 M115.5 612V639 M123.5 576V642 M131.5 583V613 M139.5 572V593 M147.5 545V576 M155.5 520V551 M163.5 524V549 M171.5 542V554 M179.5 544V557 M187.5 548V557 M195.5 552V572 M203.5 556V571 M211.5 547V563 M219.5 546V563 M227.5 526V549 M235.5 525V537 M243.5 530V548 M251.5 483V547 M259.5 480V515 M267.5 484V512 M275.5 484V508 M283.5 463V501 M291.5 472V504 M299.5 482V512 M307.5 471V500 M315.5 488V527 M323.5 508V547 M331.5 517V544 M339.5 516V531 M347.5 502V531 M355.5 478V514 M363.5 472V489 M371.5 475V486 M379.5 472V482 M387.5 470V484 M395.5 466V479 M403.5 464V472 M411.5 465V480 M419.5 468V480 M427.5 468V479 M435.5 470V487 M443.5 453V484 M451.5 434V463 M459.5 434V464 M467.5 397V444 M475.5 387V415 M483.5 371V399 M491.5 368V405 M499.5 384V420 M507.5 405V439 M515.5 420V439 M523.5 401V429 M531.5 397V414 M539.5 399V414 M547.5 398V418 M555.5 408V425 M563.5 417V426 M571.5 414V428 M579.5 424V435 M587.5 422V438 M595.5 418V430 M603.5 408V430 M611.5 414V434 M619.5 420V432 M627.5 421V443 M635.5 428V448 M643.5 419V446 M651.5 430V455 M659.5 450V470 M667.5 455V471 M675.5 427V486 M683.5 305V464 M691.5 216V311 M699.5 194V266 M707.5 143V213 M715.5 154V204 M723.5 155V192 M731.5 146V184 M739.5 171V188 M747.5 165V186 M755.5 163V180 M763.5 160V175 M771.5 153V181 M779.5 138V157 M787.5 119V150 M795.5 111V130 M803.5 105V131 M811.5 111V130 M819.5 124V140 M827.5 111V145 M835.5 114V167 M843.5 117V149 M851.5 99V131 M859.5 83V135 M867.5 87V120 M875.5 112V200 M883.5 131V212 M891.5 158V219 M899.5 135V174 M907.5 122V145 M915.5 119V145 M923.5 131V152 M931.5 127V152 M939.5 135V145 M947.5 118V139 M955.5 130V145 M963.5 134V147 M971.5 139V167 M979.5 159V190 M987.5 176V195 M995.5 163V181 M1003.5 164V185 M1011.5 171V187 M1019.5 172V193 M1027.5 147V191 M1035.5 175V212 M1043.5 183V210 M1051.5 152V202 M1059.5 129V162 M1067.5 133V186 M1075.5 153V202 M1083.5 144V185 M1091.5 144V203 M1099.5 174V208 M1107.5 188V209 M1115.5 156V193 M1123.5 157V174 M1131.5 161V173 M1139.5 158V170 M1147.5 161V179 M1155.5 159V174 M1163.5 148V175 M1171.5 171V191 M1179.5 179V186 M1187.5 181V200 M1195.5 192V212 M1203.5 195V215 M1211.5 200V247 M1219.5 221V244 M1227.5 222V244 M1235.5 185V236 M1243.5 176V199 M1251.5 188V212 M1259.5 204V240 M1267.5 194V230 M1275.5 198V234 M1283.5 201V222 M1291.5 195V214 M1299.5 195V237 M1307.5 194V219 M1315.5 199V216 M1323.5 200V214 M1331.5 201V217 M1339.5 199V213 M1347.5 195V218 M1355.5 195V218 M1363.5 178V198 M1371.5 177V189 M1379.5 180V193 M1387.5 187V200 M1395.5 190V208 M1403.5 200V235 M1411.5 187V225 M1419.5 187V207 M1427.5 155V197 M1435.5 161V187" stroke="#00ff00" stroke-width="1" fill="none"/>
<path d="M9.5 687.5H13.5V709.5H9.5Z M17.5 684.5H21.5V688.5H17.5Z M25.5 681.5H29.5V685.5H25.5Z M41.5 673.5H45.5V680.5H41.5Z M49.5 671.5H53.5V675.5H49.5Z M57.5 664.5H61.5V672.5H57.5Z M73.5 657.5H77.5V663.5H73.5Z M105.5 621.5H109.5V691.5H105.5Z M121.5 589.5H125.5V629.5H121.5Z M137.5 573.5H141.5V591.5H137.5Z M145.5 547.5H149.5V574.5H145.5Z M153.5 528.5H157.5V547.5H153.5Z M201.5 560.5H205.5V564.5H201.5Z M209.5 548.5H213.5V561.5H209.5Z M225.5 529.5H229.5V547.5H225.5Z M249.5 486.5H253.5V545.5H249.5Z M265.5 495.5H269.5V503.5H265.5Z M281.5 474.5H285.5V495.5H281.5Z M297.5 487.5H301.5V495.5H297.5Z M329.5 525.5H333.5V536.5H329.5Z M337.5 519.5H341.5V526.5H337.5Z M345.5 510.5H349.5V519.5H345.5Z M353.5 481.5H357.5V511.5H353.5Z M361.5 478.5H365.5V482.5H361.5Z M377.5 473.5H381.5V480.5H377.5Z M393.5 467.5H397.5V477.5H393.5Z M401.5 466.5H405.5V468.5H401.5Z M417.5 471.5H421.5V477.5H417.5Z M441.5 458.5H445.5V481.5H441.5Z M449.5 443.5H453.5V458.5H449.5Z M457.5 436.5H461.5V443.5H457.5Z M465.5 407.5H469.5V436.5H465.5Z M473.5 393.5H477.5V407.5H473.5Z M481.5 377.5H485.5V394.5H481.5Z M513.5 425.5H517.5V430.5H513.5Z M521.5 402.5H525.5V425.5H521.5Z M561.5 418.5H565.5V424.5H561.5Z M585.5 423.5H589.5V430.5H585.5Z M601.5 415.5H605.5V426.5H601.5Z M617.5 422.5H621.5V430.5H617.5Z M633.5 429.5H637.5V440.5H633.5Z M665.5 460.5H669.5V462.5H665.5Z M673.5 439.5H677.5V460.5H673.5Z M681.5 306.5H685.5V439.5H681.5Z M689.5 255.5H693.5V305.5H689.5Z M697.5 205.5H701.5V255.5H697.5Z M705.5 191.5H709.5V205.5H705.5Z M713.5 157.5H717.5V191.5H713.5Z M745.5 167.5H749.5V184.5H745.5Z M753.5 166.5H757.5V168.5H753.5Z M769.5 154.5H773.5V172.5H769.5Z M777.5 142.5H781.5V154.5H777.5Z M785.5 121.5H789.5V142.5H785.5Z M801.5 116.5H805.5V122.5H801.5Z M825.5 114.5H829.5V133.5H825.5Z M841.5 122.5H845.5V127.5H841.5Z M857.5 93.5H861.5V122.5H857.5Z M889.5 160.5H893.5V210.5H889.5Z M897.5 142.5H901.5V160.5H897.5Z M905.5 139.5H909.5V142.5H905.5Z M929.5 136.5H933.5V149.5H929.5Z M985.5 177.5H989.5V187.5H985.5Z M993.5 167.5H997.5V178.5H993.5Z M1009.5 181.5H1013.5V183.5H1009.5Z M1025.5 176.5H1029.5V179.5H1025.5Z M1049.5 158.5H1053.5V199.5H1049.5Z M1057.5 136.5H1061.5V158.5H1057.5Z M1081.5 158.5H1085.5V168.5H1081.5Z M1105.5 189.5H1109.5V205.5H1105.5Z M1113.5 158.5H1117.5V189.5H1113.5Z M1129.5 162.5H1133.5V167.5H1129.5Z M1153.5 160.5H1157.5V163.5H1153.5Z M1201.5 202.5H1205.5V207.5H1201.5Z M1217.5 229.5H1221.5V241.5H1217.5Z M1233.5 186.5H1237.5V228.5H1233.5Z M1273.5 204.5H1277.5V222.5H1273.5Z M1289.5 200.5H1293.5V211.5H1289.5Z M1297.5 197.5H1301.5V200.5H1297.5Z M1313.5 203.5H1317.5V211.5H1313.5Z M1329.5 207.5H1333.5V212.5H1329.5Z M1337.5 200.5H1341.5V208.5H1337.5Z M1353.5 196.5H1357.5V213.5H1353.5Z M1361.5 179.5H1365.5V196.5H1361.5Z M1409.5 197.5H1413.5V223.5H1409.5Z M1417.5 189.5H1421.5V197.5H1417.5Z M1425.5 161.5H1429.5V190.5H1425.5Z" stroke="#00ff00" stroke-width="1" fill="#000"/>
<path d="M81.5 655.5H85.5V669.5H81.5Z M89.5 669.5H93.5V685.5H89.5Z M97.5 684.5H101.5V691.5H97.5Z M113.5 623.5H117.5V629.5H113.5Z M161.5 528.5H165.5V543.5H161.5Z M169.5 543.5H173.5V548.5H169.5Z M177.5 546.5H181.5V552.5H177.5Z M185.5 552.5H189.5V555.5H185.5Z M193.5 555.5H197.5V564.5H193.5Z M233.5 529.5H237.5V535.5H233.5Z M241.5 534.5H245.5V546.5H241.5Z M257.5 486.5H261.5V503.5H257.5Z M289.5 474.5H293.5V495.5H289.5Z M305.5 487.5H309.5V491.5H305.5Z M313.5 490.5H317.5V521.5H313.5Z M321.5 521.5H325.5V536.5H321.5Z M385.5 474.5H389.5V477.5H385.5Z M409.5 465.5H413.5V478.5H409.5Z M425.5 470.5H429.5V473.5H425.5Z M433.5 473.5H437.5V481.5H433.5Z M489.5 377.5H493.5V402.5H489.5Z M497.5 402.5H501.5V415.5H497.5Z M505.5 414.5H509.5V430.5H505.5Z M529.5 403.5H533.5V406.5H529.5Z M545.5 405.5H549.5V414.5H545.5Z M553.5 414.5H557.5V418.5H553.5Z M569.5 418.5H573.5V425.5H569.5Z M577.5 425.5H581.5V430.5H577.5Z M593.5 423.5H597.5V425.5H593.5Z M609.5 415.5H613.5V431.5H609.5Z M625.5 422.5H629.5V440.5H625.5Z M641.5 429.5H645.5V432.5H641.5Z M649.5 433.5H653.5V453.5H649.5Z M657.5 453.5H661.5V463.5H657.5Z M721.5 157.5H725.5V159.5H721.5Z M729.5 159.5H733.5V176.5H729.5Z M737.5 177.5H741.5V182.5H737.5Z M761.5 166.5H765.5V172.5H761.5Z M793.5 121.5H797.5V123.5H793.5Z M809.5 116.5H813.5V127.5H809.5Z M817.5 127.5H821.5V133.5H817.5Z M833.5 114.5H837.5V127.5H833.5Z M865.5 93.5H869.5V118.5H865.5Z M873.5 118.5H877.5V172.5H873.5Z M881.5 171.5H885.5V210.5H881.5Z M921.5 137.5H925.5V149.5H921.5Z M937.5 137.5H941.5V142.5H937.5Z M945.5 119.5H949.5V135.5H945.5Z M953.5 134.5H957.5V137.5H953.5Z M961.5 138.5H965.5V140.5H961.5Z M969.5 140.5H973.5V162.5H969.5Z M977.5 162.5H981.5V188.5H977.5Z M1001.5 167.5H1005.5V182.5H1001.5Z M1033.5 176.5H1037.5V195.5H1033.5Z M1041.5 195.5H1045.5V199.5H1041.5Z M1065.5 136.5H1069.5V164.5H1065.5Z M1073.5 166.5H1077.5V168.5H1073.5Z M1089.5 158.5H1093.5V175.5H1089.5Z M1097.5 175.5H1101.5V205.5H1097.5Z M1121.5 158.5H1125.5V167.5H1121.5Z M1161.5 159.5H1165.5V172.5H1161.5Z M1169.5 172.5H1173.5V182.5H1169.5Z M1185.5 182.5H1189.5V194.5H1185.5Z M1193.5 194.5H1197.5V207.5H1193.5Z M1209.5 202.5H1213.5V240.5H1209.5Z M1241.5 188.5H1245.5V190.5H1241.5Z M1249.5 190.5H1253.5V205.5H1249.5Z M1257.5 205.5H1261.5V222.5H1257.5Z M1281.5 204.5H1285.5V211.5H1281.5Z M1305.5 197.5H1309.5V211.5H1305.5Z M1321.5 204.5H1325.5V211.5H1321.5Z M1345.5 200.5H1349.5V213.5H1345.5Z M1369.5 179.5H1373.5V182.5H1369.5Z M1377.5 182.5H1381.5V189.5H1377.5Z M1385.5 189.5H1389.5V197.5H1385.5Z M1393.5 197.5H1397.5V205.5H1393.5Z M1401.5 205.5H1405.5V223.5H1401.5Z M1433.5 161.5H1437.5V182.5H1433.5Z" stroke="#00ff00" stroke-width="1" fill="#fff"/>
<path d="M33 680.5H38 M33 681.5H38 M65 662.5H70 M65 663.5H70 M129 589.5H134 M129 590.5H134 M217 547.5H222 M217 548.5H222 M273 494.5H278 M273 495.5H278 M369 480.5H374 M369 481.5H374 M537 405.5H542 M537 406.5H542 M849 121.5H854 M849 122.5H854 M913 137.5H918 M913 138.5H918 M1017 179.5H1022 M1017 180.5H1022 M1137 161.5H1142 M1137 162.5H1142 M1145 162.5H1150 M1145 163.5H1150 M1177 182.5H1182 M1177 183.5H1182 M1225 228.5H1230 M1225 229.5H1230 M1265 222.5H1270 M1265 223.5H1270" stroke="#00ff00" stroke-width="1" fill="none"/>
<path d="M12 770.5H1454M12 809.5H1454M12 848.5H1454" stroke="#dcdcdc" stroke-width="1" stroke-dasharray="3 3" fill="none"/>
<g clip-path="url(#cs)" fill="none" stroke-width="1">
<path d="M11.5 794v3M12.5 790v4M13.5 786v4M14.5 781v5M15.5 777v4M16.5 772v5M17.5 768v4M18.5 764v4M19.5 760v4M20.5 756v4M21.5 752v4M22.5 748v4M23.5 745v3M24.5 741v4M25.5 737v4M26.5 733v4M27.5 731v2M75.5 731v2M76.5 733v4M77.5 737v3M78.5 740v4M79.5 744v3M80.5 747v4M81.5 751v3M82.5 754v4M83.5 758v5M84.5 763v6M85.5 769v6M86.5 775v6M87.5 781v7M88.5 788v6M89.5 794v6M90.5 800v6M91.5 806v7M92.5 813v7M93.5 820v7M94.5 827v7M95.5 834v7M96.5 841v7M97.5 848v7M98.5 855v7M99.5 862v4M100.5 855v7M101.5 848v7M102.5 841v7M103.5 833v8M104.5 826v7M105.5 819v7M106.5 812v7M107.5 806v6M108.5 802v4M109.5 797v5M110.5 792v5M111.5 788v4M112.5 783v5M113.5 778v5M114.5 774v4M115.5 770v4M116.5 766v4M117.5 763v3M118.5 760v3M119.5 756v4M120.5 753v3M121.5 750v3M122.5 746v4M123.5 744v2M127.5 739v2M164.5 737v2M165.5 739v2M167.5 742v2M169.5 745v2M170.5 747v2M171.5 749v2M172.5 751v2M173.5 753v2M174.5 755v3M175.5 758v2M176.5 760v3M177.5 763v2M178.5 765v2M179.5 767v2M180.5 769v2M181.5 771v2M183.5 774v2M185.5 777v2M186.5 779v2M187.5 781v2M188.5 783v4M189.5 787v3M190.5 790v4M191.5 794v3M192.5 797v4M193.5 801v3M194.5 804v4M195.5 808v3M196.5 811v3M197.5 814v2M198.5 816v3M199.5 819v3M200.5 822v3M201.5 825v2M202.5 827v3M203.5 830v3M204.5 833v2M205.5 835v2M206.5 837v2M207.5 839v3M208.5 842v2M209.5 844v2M210.5 846v2M211.5 848v2M212.5 845v3M213.5 842v3M214.5 839v3M215.5 837v2M216.5 834v3M217.5 831v3M218.5 828v3M219.5 823v5M220.5 817v6M221.5 810v7M222.5 804v6M223.5 797v7M224.5 791v6M225.5 784v7M226.5 778v6M227.5 773v5M228.5 769v4M229.5 766v3M230.5 762v4M231.5 759v3M232.5 755v4M233.5 752v3M234.5 748v4M235.5 746v2M236.5 747v2M237.5 749v2M238.5 751v2M239.5 753v2M240.5 755v2M241.5 757v2M242.5 759v2M276.5 757v2M277.5 755v2M279.5 752v2M281.5 749v2M282.5 747v2M299.5 758v2M300.5 760v3M301.5 763v2M302.5 765v3M303.5 768v3M304.5 771v3M305.5 774v2M306.5 776v3M307.5 779v3M308.5 782v4M309.5 786v4M310.5 790v3M311.5 793v4M312.5 797v3M313.5 800v4M314.5 804v4M315.5 808v6M316.5 814v8M317.5 822v8M318.5 830v8M319.5 838v8M320.5 846v8M321.5 854v8M322.5 862v8M323.5 870v4M332.5 876v2M333.5 874v2M334.5 872v2M336.5 869v2M337.5 867v2M338.5 865v2M339.5 863v2M340.5 860v3M341.5 857v3M342.5 854v3M343.5 850v4M344.5 847v3M345.5 844v3M346.5 841v3M347.5 837v4M348.5 832v5M349.5 827v5M350.5 822v5M351.5 817v5M352.5 812v5M353.5 807v5M354.5 802v5M355.5 797v5M356.5 791v6M357.5 785v6M358.5 780v5M359.5 774v6M360.5 769v5M361.5 763v6M362.5 757v6M363.5 753v4M364.5 751v2M365.5 748v3M366.5 746v2M367.5 743v3M368.5 741v2M369.5 738v3M370.5 736v2M371.5 734v2M404.5 736v2M405.5 738v2M406.5 740v2M408.5 743v2M409.5 745v2M410.5 747v2M411.5 749v2M412.5 751v2M413.5 753v3M414.5 756v2M415.5 758v3M416.5 761v2M417.5 763v3M418.5 766v2M419.5 768v5M420.5 773v6M421.5 779v6M422.5 785v7M423.5 792v6M424.5 798v7M425.5 805v6M426.5 811v6M427.5 817v4M428.5 821v2M431.5 825v2M434.5 829v2M435.5 830v2M436.5 826v4M437.5 822v4M438.5 818v4M439.5 815v3M440.5 811v4M441.5 807v4M442.5 803v4M443.5 799v4M444.5 795v4M445.5 791v4M446.5 786v5M447.5 782v4M448.5 777v5M449.5 773v4M450.5 769v4M451.5 764v5M452.5 760v4M453.5 756v4M454.5 751v5M455.5 747v4M456.5 742v5M457.5 738v4M458.5 734v4M459.5 731v3M484.5 732v2M485.5 734v2M486.5 736v2M487.5 738v2M488.5 740v2M489.5 742v2M490.5 744v2M491.5 746v2M492.5 748v2M493.5 750v3M494.5 753v2M495.5 755v3M496.5 758v2M497.5 760v3M498.5 763v2M499.5 765v4M500.5 769v4M501.5 773v4M502.5 777v5M503.5 782v4M504.5 786v5M505.5 791v4M506.5 795v4M507.5 799v5M508.5 804v4M509.5 808v4M510.5 812v4M511.5 816v5M512.5 821v4M513.5 825v4M514.5 829v4M515.5 833v3M523.5 841v2M524.5 839v2M525.5 837v2M526.5 835v2M527.5 833v2M528.5 831v2M529.5 829v2M530.5 827v2M532.5 824v2M533.5 822v2M535.5 819v2M537.5 816v2M538.5 814v2M563.5 813v2M564.5 815v4M565.5 819v3M566.5 822v4M567.5 826v3M568.5 829v4M569.5 833v3M570.5 836v4M571.5 840v3M572.5 843v3M573.5 846v2M574.5 848v3M575.5 851v3M576.5 854v3M577.5 857v2M578.5 859v3M579.5 862v2M581.5 865v2M585.5 870v2M591.5 868v2M595.5 862v3M596.5 857v5M597.5 852v5M598.5 847v5M599.5 842v5M600.5 837v5M601.5 832v5M602.5 827v5M603.5 824v3M607.5 828v2M611.5 832v2M612.5 829v3M613.5 826v3M614.5 823v3M615.5 821v2M616.5 818v3M617.5 815v3M618.5 812v3M619.5 810v4M620.5 814v7M621.5 821v6M622.5 827v7M623.5 834v7M624.5 841v7M625.5 848v6M626.5 854v7M627.5 861v4M628.5 860v3M629.5 857v3M630.5 854v3M631.5 852v2M632.5 849v3M633.5 846v3M634.5 843v3M635.5 841v2M639.5 845v2M651.5 855v2M652.5 857v2M653.5 859v3M654.5 862v3M655.5 865v2M656.5 867v3M657.5 870v3M658.5 873v2M659.5 875v2M663.5 880v2M667.5 884v2M668.5 880v4M669.5 876v4M670.5 873v3M671.5 869v4M672.5 866v3M673.5 862v4M674.5 858v4M675.5 851v7M676.5 841v10M677.5 830v11M678.5 819v11M679.5 809v10M680.5 798v11M681.5 787v11M682.5 777v10M683.5 770v7M684.5 766v4M685.5 762v4M686.5 758v4M687.5 754v4M688.5 750v4M689.5 746v4M690.5 742v4M691.5 740v2M695.5 735v2M773.5 761v2M777.5 756v2M779.5 753v2M780.5 750v3M781.5 747v3M782.5 744v3M783.5 742v2M784.5 739v3M785.5 736v3M786.5 733v3M787.5 731v2M804.5 734v2M807.5 738v2M810.5 742v2M812.5 745v2M813.5 747v2M814.5 749v2M816.5 752v2M817.5 754v2M818.5 756v2M843.5 768v2M844.5 770v4M845.5 774v3M846.5 777v4M847.5 781v3M848.5 784v4M849.5 788v3M850.5 791v4M851.5 794v3M852.5 790v4M853.5 786v4M854.5 781v5M855.5 777v4M856.5 772v5M857.5 768v4M858.5 764v4M859.5 761v3M860.5 763v2M861.5 765v2M862.5 767v3M863.5 770v2M864.5 772v3M865.5 775v2M866.5 777v2M867.5 779v5M868.5 784v6M869.5 790v6M870.5 796v7M871.5 803v6M872.5 809v7M873.5 816v6M874.5 822v6M875.5 828v6M876.5 834v6M877.5 840v6M878.5 846v6M879.5 852v5M880.5 857v6M881.5 863v6M882.5 869v6M883.5 875v3M884.5 875v2M885.5 873v2M886.5 871v2M888.5 868v2M889.5 866v2M890.5 864v2M891.5 862v2M892.5 858v4M893.5 855v3M894.5 852v3M895.5 848v4M896.5 845v3M897.5 842v3M898.5 838v4M899.5 834v4M900.5 830v4M901.5 826v4M902.5 822v4M903.5 818v4M904.5 814v4M905.5 810v4M906.5 806v4M907.5 803v3M909.5 800v2M913.5 795v2M923.5 787v2M924.5 785v2M925.5 783v2M926.5 781v2M927.5 779v2M928.5 777v2M929.5 775v2M930.5 773v2M931.5 770v3M932.5 768v2M933.5 766v2M934.5 764v2M935.5 762v2M936.5 760v2M937.5 758v2M938.5 756v2M939.5 754v2M940.5 752v2M941.5 750v2M942.5 748v2M943.5 745v3M944.5 743v2M945.5 741v2M946.5 739v2M947.5 737v2M956.5 744v2M958.5 747v2M960.5 750v2M962.5 753v2M963.5 755v5M964.5 760v8M965.5 768v8M966.5 776v8M967.5 784v9M968.5 793v8M969.5 801v8M970.5 809v8M971.5 817v8M972.5 825v6M973.5 831v7M974.5 838v6M975.5 844v7M976.5 851v6M977.5 857v7M978.5 864v6M979.5 870v4M987.5 875v2M988.5 873v2M989.5 871v2M990.5 869v2M991.5 866v3M992.5 864v2M993.5 862v2M994.5 860v2M995.5 858v2M1012.5 855v2M1014.5 858v2M1016.5 861v2M1018.5 864v2M1020.5 864v2M1022.5 861v2M1024.5 858v2M1026.5 855v2M1036.5 857v2M1039.5 861v2M1042.5 865v2M1043.5 865v3M1044.5 859v6M1045.5 853v6M1046.5 847v6M1047.5 842v5M1048.5 836v6M1049.5 830v6M1050.5 824v6M1051.5 818v6M1052.5 812v6M1053.5 805v7M1054.5 798v7M1055.5 792v6M1056.5 785v7M1057.5 778v7M1058.5 772v6M1059.5 768v4M1061.5 765v2M1065.5 760v2M1067.5 758v2M1068.5 760v3M1069.5 763v3M1070.5 766v3M1071.5 769v2M1072.5 771v3M1073.5 774v3M1074.5 777v3M1075.5 780v2M1076.5 782v2M1077.5 784v2M1078.5 786v2M1079.5 788v2M1080.5 790v2M1081.5 792v2M1082.5 794v2M1084.5 797v2M1086.5 800v2M1088.5 803v2M1090.5 806v2M1091.5 808v2M1092.5 810v3M1093.5 813v4M1094.5 817v3M1095.5 820v3M1096.5 823v3M1097.5 826v4M1098.5 830v3M1099.5 833v3M1100.5 836v3M1101.5 839v3M1102.5 842v3M1103.5 845v2M1104.5 847v3M1105.5 850v3M1106.5 853v3M1107.5 856v2M1108.5 854v2M1109.5 851v3M1110.5 848v3M1111.5 846v2M1112.5 843v3M1113.5 840v3M1114.5 838v2M1115.5 834v4M1116.5 830v4M1117.5 825v5M1118.5 820v5M1119.5 816v4M1120.5 811v5M1121.5 806v5M1122.5 802v4M1123.5 797v5M1124.5 793v4M1125.5 789v4M1126.5 785v4M1127.5 781v4M1128.5 777v4M1129.5 773v4M1130.5 769v4M1131.5 766v3M1132.5 764v2M1133.5 762v2M1134.5 760v2M1135.5 758v2M1136.5 756v2M1137.5 754v2M1138.5 752v2M1156.5 743v2M1157.5 745v2M1158.5 747v2M1160.5 750v2M1161.5 752v2M1162.5 754v2M1163.5 756v3M1164.5 759v4M1165.5 763v4M1166.5 767v4M1167.5 771v4M1168.5 775v4M1169.5 779v4M1170.5 783v4M1171.5 787v6M1172.5 793v8M1173.5 801v8M1174.5 809v8M1175.5 817v7M1176.5 824v8M1177.5 832v8M1178.5 840v8M1179.5 848v6M1180.5 854v4M1181.5 858v5M1182.5 863v4M1183.5 867v5M1184.5 872v4M1185.5 876v5M1186.5 881v4M1187.5 885v3M1227.5 867v4M1228.5 861v6M1229.5 855v6M1230.5 849v6M1231.5 843v6M1232.5 837v6M1233.5 831v6M1234.5 825v6M1235.5 819v6M1236.5 814v5M1237.5 809v5M1238.5 804v5M1239.5 798v6M1240.5 793v5M1241.5 788v5M1242.5 783v5M1243.5 779v4M1244.5 776v3M1245.5 773v3M1246.5 770v3M1247.5 767v3M1248.5 764v3M1249.5 761v3M1250.5 758v3M1251.5 756v3M1252.5 759v4M1253.5 763v4M1254.5 767v4M1255.5 771v4M1256.5 775v4M1257.5 779v4M1258.5 783v4M1259.5 787v3M1260.5 790v4M1261.5 794v4M1262.5 798v4M1263.5 802v3M1264.5 805v4M1265.5 809v4M1266.5 813v4M1267.5 817v2M1284.5 817v2M1285.5 815v2M1286.5 813v2M1287.5 811v2M1288.5 809v2M1289.5 807v2M1290.5 805v2M1315.5 783v2M1316.5 785v2M1317.5 787v2M1318.5 789v2M1319.5 791v2M1320.5 793v2M1321.5 795v2M1322.5 797v2M1339.5 808v2M1340.5 810v3M1341.5 813v3M1342.5 816v3M1343.5 819v4M1344.5 823v3M1345.5 826v3M1346.5 829v3M1347.5 831v3M1348.5 826v5M1349.5 821v5M1350.5 816v5M1351.5 812v4M1352.5 807v5M1353.5 802v5M1354.5 797v5M1355.5 793v4M1356.5 789v4M1357.5 785v4M1358.5 782v3M1359.5 778v4M1360.5 775v3M1361.5 771v4M1362.5 767v4M1363.5 764v3M1364.5 760v4M1365.5 757v3M1366.5 753v4M1367.5 750v3M1368.5 746v4M1369.5 743v3M1370.5 739v4M1371.5 737v2M1372.5 738v2M1373.5 740v2M1375.5 743v2M1377.5 746v2M1378.5 748v2M1379.5 750v2M1380.5 752v4M1381.5 756v3M1382.5 759v4M1383.5 763v3M1384.5 766v4M1385.5 770v3M1386.5 773v4M1387.5 777v4M1388.5 781v4M1389.5 785v4M1390.5 789v5M1391.5 794v4M1392.5 798v5M1393.5 803v4M1394.5 807v4M1395.5 811v5M1396.5 816v5M1397.5 821v5M1398.5 826v5M1399.5 831v6M1400.5 837v5M1401.5 842v5M1402.5 847v5M1403.5 852v3M1405.5 851v2M1409.5 846v2M1411.5 843v2M1412.5 840v3M1413.5 837v3M1414.5 834v3M1415.5 831v3M1416.5 828v3M1417.5 825v3M1418.5 822v3M1419.5 817v5M1420.5 809v8M1421.5 802v7M1422.5 795v7M1423.5 787v8M1424.5 780v7M1425.5 773v7M1426.5 765v8M1427.5 761v4M28 731.5h47M144 731.5h12M460 731.5h24M699 731.5h26M788 731.5h2M138 732.5h6M156 732.5h2M698 732.5h1M725 732.5h2M790 732.5h4M136 733.5h2M158 733.5h2M376 733.5h5M697 733.5h1M727 733.5h2M794 733.5h10M133 734.5h3M160 734.5h1M372 734.5h4M381 734.5h3M394 734.5h6M696 734.5h1M729 734.5h2M131 735.5h2M161 735.5h2M384 735.5h2M390 735.5h4M400 735.5h4M731 735.5h1M130 736.5h1M163 736.5h1M386 736.5h4M732 736.5h1M805 736.5h1M129 737.5h1M694 737.5h1M733 737.5h1M806 737.5h1M128 738.5h1M693 738.5h1M734 738.5h1M948 738.5h2M692 739.5h1M735 739.5h1M950 739.5h1M736 740.5h1M808 740.5h1M951 740.5h1M126 741.5h1M166 741.5h1M737 741.5h1M809 741.5h1M952 741.5h2M125 742.5h1M407 742.5h1M738 742.5h1M954 742.5h1M1154 742.5h2M1374 742.5h1M124 743.5h1M739 743.5h1M955 743.5h1M1152 743.5h2M168 744.5h1M740 744.5h2M811 744.5h1M1149 744.5h3M742 745.5h1M1147 745.5h2M1376 745.5h1M283 746.5h1M743 746.5h1M957 746.5h1M1146 746.5h1M284 747.5h1M744 747.5h2M1144 747.5h2M285 748.5h1M746 748.5h1M1143 748.5h1M286 749.5h1M747 749.5h1M959 749.5h1M1142 749.5h1M1159 749.5h1M287 750.5h1M748 750.5h2M1140 750.5h2M267 751.5h1M280 751.5h1M288 751.5h1M750 751.5h2M815 751.5h1M1139 751.5h1M266 752.5h1M268 752.5h1M289 752.5h1M752 752.5h1M961 752.5h1M251 753.5h1M265 753.5h1M269 753.5h1M290 753.5h1M753 753.5h2M250 754.5h1M252 754.5h2M264 754.5h1M270 754.5h1M278 754.5h1M291 754.5h2M755 754.5h1M249 755.5h1M254 755.5h1M263 755.5h1M271 755.5h1M293 755.5h2M756 755.5h2M778 755.5h1M248 756.5h1M255 756.5h1M262 756.5h1M272 756.5h1M295 756.5h2M758 756.5h1M247 757.5h1M256 757.5h2M261 757.5h1M273 757.5h1M297 757.5h2M759 757.5h1M246 758.5h1M258 758.5h1M260 758.5h1M274 758.5h1M760 758.5h2M776 758.5h1M819 758.5h2M245 759.5h1M259 759.5h1M275 759.5h1M762 759.5h1M775 759.5h1M821 759.5h3M1066 759.5h1M1434 759.5h2M244 760.5h1M763 760.5h2M774 760.5h1M824 760.5h2M1430 760.5h4M243 761.5h1M765 761.5h2M826 761.5h2M1428 761.5h2M767 762.5h2M828 762.5h1M1064 762.5h1M769 763.5h2M772 763.5h1M829 763.5h1M1063 763.5h1M771 764.5h1M830 764.5h1M1062 764.5h1M831 765.5h1M832 766.5h1M833 767.5h1M1060 767.5h1M834 768.5h1M840 768.5h3M835 769.5h5M182 773.5h1M184 776.5h1M1314 784.5h1M1312 785.5h2M1311 786.5h1M1310 787.5h1M1308 788.5h2M921 789.5h2M1307 789.5h1M920 790.5h1M1306 790.5h1M918 791.5h2M1305 791.5h1M916 792.5h2M1304 792.5h1M915 793.5h1M1302 793.5h2M914 794.5h1M1301 794.5h1M1300 795.5h1M1083 796.5h1M1299 796.5h1M912 797.5h1M1298 797.5h1M911 798.5h1M1297 798.5h1M910 799.5h1M1085 799.5h1M1296 799.5h1M1323 799.5h2M1295 800.5h1M1325 800.5h2M1294 801.5h1M1327 801.5h2M908 802.5h1M1087 802.5h1M1293 802.5h1M1329 802.5h2M1292 803.5h1M1331 803.5h1M1291 804.5h1M1332 804.5h2M1089 805.5h1M1334 805.5h2M1336 806.5h1M1337 807.5h2M552 809.5h5M546 810.5h6M557 810.5h2M544 811.5h2M559 811.5h2M541 812.5h3M561 812.5h2M539 813.5h2M536 818.5h1M1268 819.5h2M1283 819.5h1M1270 820.5h2M1281 820.5h2M534 821.5h1M1272 821.5h1M1279 821.5h2M1273 822.5h2M1277 822.5h2M429 823.5h1M1275 823.5h2M430 824.5h1M604 825.5h1M531 826.5h1M605 826.5h1M432 827.5h1M606 827.5h1M433 828.5h1M608 830.5h1M609 831.5h1M610 832.5h1M516 836.5h1M517 837.5h1M518 838.5h2M520 839.5h1M521 840.5h1M522 841.5h1M636 842.5h1M637 843.5h1M638 844.5h1M1410 845.5h1M640 847.5h1M641 848.5h1M1408 848.5h1M642 849.5h1M1407 849.5h1M643 850.5h1M1406 850.5h1M644 851.5h2M646 852.5h2M648 853.5h1M1003 853.5h5M1404 853.5h1M649 854.5h2M1001 854.5h2M1008 854.5h4M1027 854.5h3M1000 855.5h1M1030 855.5h4M998 856.5h2M1034 856.5h2M996 857.5h2M1013 857.5h1M1025 857.5h1M1037 859.5h1M1015 860.5h1M1023 860.5h1M1038 860.5h1M1017 863.5h1M1021 863.5h1M1040 863.5h1M580 864.5h1M1041 864.5h1M594 865.5h1M593 866.5h1M1019 866.5h1M582 867.5h1M592 867.5h1M583 868.5h1M584 869.5h1M590 870.5h1M887 870.5h1M335 871.5h1M589 871.5h1M1225 871.5h2M586 872.5h1M588 872.5h1M1223 872.5h2M587 873.5h1M980 873.5h1M1221 873.5h2M324 874.5h2M981 874.5h3M1219 874.5h2M326 875.5h2M984 875.5h2M1218 875.5h1M328 876.5h1M986 876.5h1M1217 876.5h1M329 877.5h2M660 877.5h1M1216 877.5h1M331 878.5h1M661 878.5h1M1214 878.5h2M662 879.5h1M1213 879.5h1M1212 880.5h1M1210 881.5h2M664 882.5h1M1206 882.5h4M665 883.5h1M1203 883.5h3M666 884.5h1M1201 884.5h2M1199 885.5h2M1197 886.5h2M1188 887.5h9" stroke="#ff0000"/>
<path d="M11.5 836v3M12.5 832v4M13.5 828v4M14.5 824v4M15.5 820v4M16.5 816v4M17.5 812v4M18.5 808v4M19.5 804v4M20.5 800v4M21.5 796v4M22.5 792v4M23.5 788v4M24.5 784v4M25.5 780v4M26.5 776v4M27.5 773v3M28.5 770v3M29.5 767v3M30.5 764v3M31.5 762v2M32.5 759v3M33.5 756v3M34.5 753v3M35.5 751v2M36.5 749v2M38.5 746v2M40.5 743v2M42.5 740v2M79.5 736v2M83.5 741v2M84.5 743v4M85.5 747v3M86.5 750v3M87.5 753v4M88.5 757v3M89.5 760v3M90.5 763v4M91.5 767v4M92.5 771v4M93.5 775v4M94.5 779v4M95.5 783v4M96.5 787v4M97.5 791v4M98.5 795v4M99.5 799v3M103.5 805v2M115.5 801v2M116.5 798v3M117.5 795v3M118.5 792v3M119.5 789v3M120.5 786v3M121.5 783v3M122.5 780v3M123.5 777v3M124.5 774v3M125.5 771v3M126.5 768v3M127.5 765v3M128.5 762v3M129.5 759v3M130.5 756v3M131.5 754v2M132.5 752v2M133.5 750v2M134.5 748v2M135.5 746v2M136.5 744v2M137.5 742v2M138.5 740v2M175.5 743v2M180.5 749v2M181.5 751v2M182.5 753v2M183.5 755v2M184.5 757v2M185.5 759v2M186.5 761v2M187.5 763v2M188.5 765v2M189.5 767v3M190.5 770v3M191.5 773v2M192.5 775v3M193.5 778v3M194.5 781v2M195.5 783v3M196.5 786v2M197.5 788v3M198.5 791v3M199.5 794v2M200.5 796v3M201.5 799v3M202.5 802v2M203.5 804v3M204.5 807v2M205.5 809v2M206.5 811v2M207.5 813v3M208.5 816v2M209.5 818v2M210.5 820v2M211.5 822v2M219.5 828v2M220.5 826v2M221.5 824v2M222.5 822v2M223.5 820v2M224.5 818v2M225.5 816v2M226.5 814v2M227.5 812v2M228.5 809v3M229.5 806v3M230.5 803v3M231.5 800v3M232.5 797v3M233.5 794v3M234.5 791v3M235.5 788v3M236.5 786v2M237.5 784v2M238.5 782v2M239.5 779v3M240.5 777v2M241.5 775v2M242.5 773v2M243.5 771v2M245.5 768v2M249.5 763v2M301.5 756v2M305.5 761v2M307.5 764v2M308.5 766v2M309.5 768v2M310.5 770v2M311.5 772v2M312.5 774v2M313.5 776v2M314.5 778v2M315.5 780v3M316.5 783v4M317.5 787v4M318.5 791v4M319.5 795v5M320.5 800v4M321.5 804v4M322.5 808v4M323.5 812v4M324.5 816v4M325.5 820v3M326.5 823v3M327.5 826v4M328.5 830v3M329.5 833v3M330.5 836v4M331.5 840v2M332.5 842v2M333.5 844v2M334.5 846v2M335.5 848v2M336.5 850v2M337.5 852v2M338.5 854v2M347.5 855v2M348.5 853v2M349.5 851v2M350.5 849v2M351.5 846v3M352.5 844v2M353.5 842v2M354.5 840v2M355.5 836v4M356.5 832v4M357.5 828v4M358.5 824v4M359.5 819v5M360.5 815v4M361.5 811v4M362.5 807v4M363.5 802v5M364.5 798v4M365.5 794v4M366.5 790v4M367.5 786v4M368.5 782v4M369.5 778v4M370.5 774v4M371.5 770v4M372.5 768v2M373.5 765v3M374.5 763v2M375.5 760v3M376.5 758v2M377.5 755v3M378.5 753v2M379.5 751v2M381.5 748v2M385.5 743v2M412.5 740v2M414.5 743v2M416.5 746v2M418.5 749v2M419.5 751v2M420.5 753v3M421.5 756v3M422.5 759v3M423.5 762v3M424.5 765v3M425.5 768v3M426.5 771v3M427.5 774v3M428.5 777v3M429.5 780v3M430.5 783v3M431.5 786v2M432.5 788v3M433.5 791v3M434.5 794v3M435.5 797v2M447.5 799v2M451.5 794v2M452.5 792v2M453.5 789v3M454.5 787v2M455.5 784v3M456.5 782v2M457.5 779v3M458.5 777v2M459.5 774v3M460.5 772v2M461.5 770v2M462.5 767v3M463.5 765v2M464.5 762v3M465.5 760v2M466.5 758v2M467.5 756v2M468.5 754v2M469.5 752v2M470.5 750v2M471.5 748v2M472.5 746v2M473.5 744v2M474.5 742v2M492.5 737v2M494.5 740v2M496.5 743v2M498.5 746v2M499.5 748v2M500.5 750v2M501.5 752v3M502.5 755v3M503.5 758v2M504.5 760v3M505.5 763v3M506.5 766v2M507.5 768v3M508.5 771v4M509.5 775v3M510.5 778v3M511.5 781v4M512.5 785v3M513.5 788v3M514.5 791v4M515.5 795v3M516.5 798v2M517.5 800v3M518.5 803v2M519.5 805v3M520.5 808v2M521.5 810v3M522.5 813v2M523.5 815v2M525.5 818v2M529.5 823v2M572.5 822v2M573.5 824v2M574.5 826v2M575.5 828v2M576.5 830v2M577.5 832v2M578.5 834v2M580.5 837v2M581.5 839v2M582.5 841v2M583.5 843v2M584.5 845v2M585.5 847v2M586.5 849v2M612.5 842v2M613.5 840v2M615.5 837v2M617.5 834v2M618.5 832v2M653.5 851v2M657.5 856v2M661.5 861v2M665.5 866v2M675.5 867v2M676.5 863v4M677.5 859v4M678.5 855v4M679.5 852v3M680.5 848v4M681.5 844v4M682.5 840v4M683.5 836v4M684.5 831v5M685.5 825v6M686.5 820v5M687.5 815v5M688.5 810v5M689.5 804v6M690.5 799v5M691.5 794v5M692.5 790v4M693.5 786v4M694.5 782v4M695.5 778v4M696.5 774v4M697.5 770v4M698.5 766v4M699.5 763v3M700.5 761v2M701.5 759v2M702.5 756v3M703.5 754v2M704.5 751v3M705.5 749v2M706.5 747v2M707.5 745v2M709.5 742v2M713.5 737v2M781.5 756v2M785.5 751v2M844.5 765v2M846.5 768v2M848.5 771v2M850.5 774v2M867.5 777v2M868.5 779v2M869.5 781v2M870.5 783v2M871.5 785v3M872.5 788v2M873.5 790v2M874.5 792v2M875.5 794v3M876.5 797v4M877.5 801v4M878.5 805v4M879.5 809v4M880.5 813v4M881.5 817v4M882.5 821v4M883.5 825v3M884.5 828v2M885.5 830v2M886.5 832v2M887.5 834v2M888.5 836v2M889.5 838v2M890.5 840v2M891.5 842v2M900.5 844v2M903.5 840v2M906.5 836v2M907.5 834v2M908.5 832v2M909.5 830v2M910.5 828v2M911.5 826v2M912.5 824v2M913.5 822v2M914.5 820v2M916.5 817v2M917.5 815v2M918.5 813v2M920.5 810v2M921.5 808v2M922.5 806v2M924.5 803v2M925.5 801v2M926.5 799v2M927.5 797v2M928.5 795v2M929.5 793v2M930.5 791v2M932.5 788v2M933.5 786v2M934.5 784v2M935.5 782v2M936.5 780v2M937.5 778v2M938.5 776v2M940.5 773v2M941.5 771v2M942.5 769v2M943.5 767v2M944.5 765v2M945.5 763v2M946.5 761v2M963.5 750v2M964.5 752v3M965.5 755v3M966.5 758v3M967.5 761v3M968.5 764v3M969.5 767v3M970.5 770v3M971.5 773v4M972.5 777v5M973.5 782v5M974.5 787v5M975.5 792v5M976.5 797v5M977.5 802v5M978.5 807v5M979.5 812v4M980.5 816v4M981.5 820v3M982.5 823v3M983.5 826v4M984.5 830v3M985.5 833v3M986.5 836v4M987.5 840v2M988.5 842v2M989.5 844v2M990.5 846v2M992.5 849v2M993.5 851v2M994.5 853v2M1044.5 859v2M1045.5 857v2M1047.5 854v2M1049.5 851v2M1050.5 849v2M1051.5 847v2M1052.5 843v4M1053.5 840v3M1054.5 836v4M1055.5 833v3M1056.5 829v4M1057.5 826v3M1058.5 822v4M1059.5 819v3M1060.5 816v3M1061.5 812v4M1062.5 809v3M1063.5 806v3M1064.5 803v3M1065.5 799v4M1066.5 796v3M1067.5 794v2M1069.5 791v2M1073.5 786v2M1091.5 791v2M1092.5 793v2M1093.5 795v2M1094.5 797v2M1095.5 799v2M1096.5 801v2M1097.5 803v2M1098.5 805v2M1099.5 807v3M1100.5 810v2M1101.5 812v3M1102.5 815v3M1103.5 818v2M1104.5 820v3M1105.5 823v3M1106.5 826v2M1107.5 828v2M1123.5 828v2M1124.5 826v2M1125.5 823v3M1126.5 821v2M1127.5 818v3M1128.5 816v2M1129.5 813v3M1130.5 811v2M1131.5 808v3M1132.5 805v3M1133.5 801v4M1134.5 798v3M1135.5 795v3M1136.5 792v3M1137.5 788v4M1138.5 785v3M1139.5 782v3M1140.5 780v2M1141.5 777v3M1142.5 775v2M1143.5 772v3M1144.5 770v2M1145.5 767v3M1146.5 765v2M1147.5 763v2M1148.5 761v2M1150.5 758v2M1152.5 755v2M1154.5 752v2M1164.5 751v2M1165.5 753v2M1166.5 755v2M1167.5 757v2M1168.5 759v2M1169.5 761v2M1170.5 763v2M1171.5 765v3M1172.5 768v5M1173.5 773v4M1174.5 777v5M1175.5 782v5M1176.5 787v5M1177.5 792v4M1178.5 796v5M1179.5 801v5M1180.5 806v5M1181.5 811v4M1182.5 815v5M1183.5 820v5M1184.5 825v5M1185.5 830v4M1186.5 834v5M1187.5 839v4M1188.5 843v2M1189.5 845v2M1190.5 847v3M1191.5 850v2M1192.5 852v3M1193.5 855v2M1194.5 857v2M1195.5 859v2M1196.5 861v2M1197.5 863v2M1198.5 865v2M1199.5 867v2M1200.5 869v2M1201.5 871v2M1202.5 873v2M1227.5 875v2M1228.5 873v2M1229.5 871v2M1230.5 869v2M1231.5 866v3M1232.5 864v2M1233.5 862v2M1234.5 860v2M1235.5 857v3M1236.5 853v4M1237.5 849v4M1238.5 846v3M1239.5 842v4M1240.5 839v3M1241.5 835v4M1242.5 831v4M1243.5 828v3M1244.5 824v4M1245.5 820v4M1246.5 817v3M1247.5 813v4M1248.5 810v3M1249.5 806v4M1250.5 802v4M1251.5 800v2M1252.5 798v2M1254.5 795v2M1256.5 792v2M1258.5 789v2M1269.5 796v2M1273.5 801v2M1340.5 802v2M1342.5 805v2M1344.5 808v2M1346.5 811v2M1356.5 807v2M1357.5 805v2M1358.5 803v2M1359.5 801v2M1360.5 799v2M1361.5 797v2M1362.5 795v2M1363.5 793v2M1364.5 790v3M1365.5 787v3M1366.5 784v3M1367.5 782v2M1368.5 779v3M1369.5 776v3M1370.5 773v3M1371.5 771v2M1373.5 768v2M1377.5 763v2M1387.5 762v2M1388.5 764v2M1389.5 766v2M1390.5 768v2M1391.5 770v2M1392.5 772v2M1393.5 774v2M1394.5 776v2M1395.5 778v3M1396.5 781v4M1397.5 785v3M1398.5 788v3M1399.5 791v4M1400.5 795v3M1401.5 798v3M1402.5 801v4M1403.5 805v3M1404.5 808v2M1405.5 810v2M1406.5 812v2M1407.5 814v3M1408.5 817v2M1409.5 819v2M1410.5 821v2M1411.5 823v2M1419.5 828v2M1420.5 826v2M1421.5 823v3M1422.5 821v2M1423.5 818v3M1424.5 816v2M1425.5 813v3M1426.5 811v2M1427.5 808v3M1428.5 806v2M1429.5 804v2M1430.5 802v2M1431.5 799v3M1432.5 797v2M1433.5 795v2M1434.5 793v2M1435.5 791v2M56 732.5h20M154 732.5h6M722 732.5h6M51 733.5h5M76 733.5h1M150 733.5h4M160 733.5h4M720 733.5h2M728 733.5h5M50 734.5h1M77 734.5h1M147 734.5h3M164 734.5h2M483 734.5h3M717 734.5h3M733 734.5h3M48 735.5h2M78 735.5h1M145 735.5h2M166 735.5h1M400 735.5h5M482 735.5h1M486 735.5h4M715 735.5h2M736 735.5h2M47 736.5h1M144 736.5h1M167 736.5h1M395 736.5h5M405 736.5h2M481 736.5h1M490 736.5h2M714 736.5h1M738 736.5h2M46 737.5h1M142 737.5h2M168 737.5h2M393 737.5h2M407 737.5h2M480 737.5h1M740 737.5h2M44 738.5h2M80 738.5h1M140 738.5h2M170 738.5h1M392 738.5h1M409 738.5h2M478 738.5h2M742 738.5h2M803 738.5h9M43 739.5h1M81 739.5h1M139 739.5h1M171 739.5h1M390 739.5h2M411 739.5h1M477 739.5h1M493 739.5h1M712 739.5h1M744 739.5h1M801 739.5h2M812 739.5h1M82 740.5h1M172 740.5h1M388 740.5h2M476 740.5h1M711 740.5h1M745 740.5h2M799 740.5h2M813 740.5h1M173 741.5h1M387 741.5h1M475 741.5h1M710 741.5h1M747 741.5h1M797 741.5h2M814 741.5h2M41 742.5h1M174 742.5h1M386 742.5h1M413 742.5h1M495 742.5h1M748 742.5h2M795 742.5h2M816 742.5h1M750 743.5h2M794 743.5h1M817 743.5h1M708 744.5h1M752 744.5h1M793 744.5h1M818 744.5h1M39 745.5h1M176 745.5h1M384 745.5h1M415 745.5h1M497 745.5h1M753 745.5h2M792 745.5h1M819 745.5h1M177 746.5h1M383 746.5h1M755 746.5h1M790 746.5h2M820 746.5h2M178 747.5h1M382 747.5h1M756 747.5h1M789 747.5h1M822 747.5h1M37 748.5h1M179 748.5h1M417 748.5h1M757 748.5h1M788 748.5h1M823 748.5h1M758 749.5h2M787 749.5h1M824 749.5h2M380 750.5h1M760 750.5h1M786 750.5h1M826 750.5h1M962 750.5h1M1160 750.5h4M761 751.5h1M827 751.5h1M958 751.5h4M1155 751.5h5M762 752.5h1M828 752.5h1M955 752.5h3M282 753.5h14M763 753.5h1M784 753.5h1M829 753.5h1M954 753.5h1M266 754.5h4M280 754.5h2M296 754.5h4M764 754.5h2M783 754.5h1M830 754.5h1M953 754.5h1M1153 754.5h1M264 755.5h2M270 755.5h4M277 755.5h3M300 755.5h1M766 755.5h2M782 755.5h1M831 755.5h1M952 755.5h1M261 756.5h3M274 756.5h3M768 756.5h1M832 756.5h1M951 756.5h1M259 757.5h2M769 757.5h2M833 757.5h1M950 757.5h1M1151 757.5h1M257 758.5h2M302 758.5h1M771 758.5h5M780 758.5h1M834 758.5h1M949 758.5h1M255 759.5h2M303 759.5h1M776 759.5h4M835 759.5h1M948 759.5h1M253 760.5h2M304 760.5h1M836 760.5h2M947 760.5h1M1149 760.5h1M251 761.5h2M838 761.5h2M1379 761.5h5M250 762.5h1M840 762.5h1M1378 762.5h1M1384 762.5h3M306 763.5h1M841 763.5h2M843 764.5h1M248 765.5h1M1376 765.5h1M247 766.5h1M1375 766.5h1M246 767.5h1M845 767.5h1M1374 767.5h1M244 770.5h1M847 770.5h1M1372 770.5h1M849 773.5h1M858 773.5h3M856 774.5h2M861 774.5h2M853 775.5h3M863 775.5h2M939 775.5h1M851 776.5h2M865 776.5h2M1080 783.5h4M1075 784.5h5M1084 784.5h1M1074 785.5h1M1085 785.5h1M1086 786.5h1M1087 787.5h1M1072 788.5h1M1088 788.5h1M1259 788.5h1M1071 789.5h1M1089 789.5h1M1260 789.5h2M931 790.5h1M1070 790.5h1M1090 790.5h1M1262 790.5h1M1257 791.5h1M1263 791.5h1M1264 792.5h2M1068 793.5h1M1266 793.5h1M1315 793.5h10M1255 794.5h1M1267 794.5h1M1314 794.5h1M1325 794.5h3M1268 795.5h1M1313 795.5h1M1328 795.5h2M450 796.5h1M1312 796.5h1M1330 796.5h2M449 797.5h1M1253 797.5h1M1311 797.5h1M1332 797.5h2M448 798.5h1M1270 798.5h1M1310 798.5h1M1334 798.5h2M436 799.5h2M1271 799.5h1M1309 799.5h1M1336 799.5h1M438 800.5h1M1272 800.5h1M1308 800.5h1M1337 800.5h2M439 801.5h1M446 801.5h1M1307 801.5h1M1339 801.5h1M100 802.5h1M440 802.5h2M445 802.5h1M1306 802.5h1M101 803.5h1M114 803.5h1M442 803.5h1M444 803.5h1M1274 803.5h1M1305 803.5h1M102 804.5h1M113 804.5h1M443 804.5h1M1275 804.5h1M1304 804.5h1M1341 804.5h1M112 805.5h1M923 805.5h1M1276 805.5h1M1302 805.5h2M111 806.5h1M1277 806.5h1M1301 806.5h1M104 807.5h1M110 807.5h1M1278 807.5h1M1300 807.5h1M1343 807.5h1M105 808.5h1M109 808.5h1M1279 808.5h1M1299 808.5h1M106 809.5h1M108 809.5h1M1280 809.5h1M1297 809.5h2M1355 809.5h1M107 810.5h1M1281 810.5h1M1296 810.5h1M1345 810.5h1M1353 810.5h2M1282 811.5h1M1294 811.5h2M1351 811.5h2M919 812.5h1M1283 812.5h5M1292 812.5h2M1349 812.5h2M562 813.5h2M1288 813.5h4M1347 813.5h2M560 814.5h2M564 814.5h1M557 815.5h3M565 815.5h1M555 816.5h2M566 816.5h1M524 817.5h1M553 817.5h2M567 817.5h1M551 818.5h2M568 818.5h1M549 819.5h2M569 819.5h1M915 819.5h1M526 820.5h1M547 820.5h2M570 820.5h1M527 821.5h1M545 821.5h2M571 821.5h1M528 822.5h1M543 822.5h2M541 823.5h2M212 824.5h2M538 824.5h3M214 825.5h1M530 825.5h1M534 825.5h4M1412 825.5h2M215 826.5h1M531 826.5h3M1414 826.5h2M216 827.5h2M1416 827.5h1M218 828.5h1M1417 828.5h2M1108 830.5h1M1122 830.5h1M619 831.5h1M1109 831.5h1M1121 831.5h1M620 832.5h1M1110 832.5h1M1120 832.5h1M621 833.5h1M1111 833.5h1M1119 833.5h1M622 834.5h2M1112 834.5h1M1118 834.5h1M624 835.5h1M1113 835.5h1M1117 835.5h1M579 836.5h1M616 836.5h1M625 836.5h1M1114 836.5h1M1116 836.5h1M626 837.5h1M1115 837.5h1M627 838.5h5M905 838.5h1M614 839.5h1M632 839.5h5M904 839.5h1M637 840.5h2M639 841.5h2M641 842.5h2M902 842.5h1M643 843.5h1M892 843.5h1M901 843.5h1M611 844.5h1M644 844.5h2M893 844.5h3M610 845.5h1M646 845.5h1M896 845.5h2M609 846.5h1M647 846.5h1M898 846.5h2M608 847.5h1M648 847.5h2M606 848.5h2M650 848.5h1M991 848.5h1M605 849.5h1M651 849.5h1M604 850.5h1M652 850.5h1M587 851.5h1M603 851.5h1M588 852.5h1M602 852.5h1M589 853.5h1M601 853.5h1M654 853.5h1M1048 853.5h1M590 854.5h1M600 854.5h1M655 854.5h1M591 855.5h1M599 855.5h1M656 855.5h1M995 855.5h1M339 856.5h8M592 856.5h1M598 856.5h1M996 856.5h2M1046 856.5h1M593 857.5h1M597 857.5h1M998 857.5h2M594 858.5h1M596 858.5h1M658 858.5h1M1000 858.5h1M1026 858.5h11M595 859.5h1M659 859.5h1M1001 859.5h2M1008 859.5h8M1022 859.5h4M1037 859.5h3M660 860.5h1M1003 860.5h5M1016 860.5h6M1040 860.5h2M1042 861.5h2M662 863.5h1M663 864.5h1M664 865.5h1M666 868.5h1M672 868.5h3M667 869.5h5M1203 875.5h1M1204 876.5h1M1205 877.5h1M1225 877.5h2M1206 878.5h2M1224 878.5h1M1208 879.5h1M1222 879.5h2M1209 880.5h1M1220 880.5h2M1210 881.5h1M1216 881.5h4M1211 882.5h5" stroke="#ffe000"/>
</g>
<path d="M10.5 50.5H1454.5V728.5H10.5Z M10.5 730.5H1454.5V888.5H10.5Z" stroke="#fff" stroke-width="1" fill="none"/>
<path d="M11.5 889V892 M107.5 889V892 M203.5 889V892 M299.5 889V892 M395.5 889V892 M491.5 889V892 M587.5 889V892 M683.5 889V892 M779.5 889V892 M875.5 889V892 M971.5 889V892 M1067.5 889V892 M1163.5 889V892 M1259.5 889V892 M1355.5 889V892 M1455 72.5H1458 M1455 122.5H1458 M1455 171.5H1458 M1455 220.5H1458 M1455 269.5H1458 M1455 318.5H1458 M1455 367.5H1458 M1455 416.5H1458 M1455 465.5H1458 M1455 514.5H1458 M1455 563.5H1458 M1455 612.5H1458 M1455 661.5H1458 M1455 710.5H1458 M1455 731.5H1458 M1455 770.5H1458 M1455 809.5H1458 M1455 848.5H1458" stroke="#fff" stroke-width="1" fill="none"/>
</g>
<g clip-path="url(#ca)">
<text x="1461.6" y="76.8" font-size="12.5" fill="#fff" font-weight="normal" letter-spacing="-0.113">1.14890</text>
<text x="1461.6" y="125.80999999999999" font-size="12.5" fill="#fff" font-weight="normal" letter-spacing="-0.113">1.14625</text>
<text x="1461.6" y="174.82" font-size="12.5" fill="#fff" font-weight="normal" letter-spacing="-0.113">1.14360</text>
<text x="1461.6" y="223.83" font-size="12.5" fill="#fff" font-weight="normal" letter-spacing="-0.113">1.14095</text>
<text x="1461.6" y="272.84" font-size="12.5" fill="#fff" font-weight="normal" letter-spacing="-0.113">1.13830</text>
<text x="1461.6" y="321.84999999999997" font-size="12.5" fill="#fff" font-weight="normal" letter-spacing="-0.113">1.13565</text>
<text x="1461.6" y="370.86" font-size="12.5" fill="#fff" font-weight="normal" letter-spacing="-0.113">1.13300</text>
<text x="1461.6" y="419.87" font-size="12.5" fill="#fff" font-weight="normal" letter-spacing="-0.113">1.13035</text>
<text x="1461.6" y="468.88" font-size="12.5" fill="#fff" font-weight="normal" letter-spacing="-0.113">1.12775</text>
<text x="1461.6" y="517.8899999999999" font-size="12.5" fill="#fff" font-weight="normal" letter-spacing="-0.113">1.12510</text>
<text x="1461.6" y="566.8999999999999" font-size="12.5" fill="#fff" font-weight="normal" letter-spacing="-0.113">1.12245</text>
<text x="1461.6" y="615.91" font-size="12.5" fill="#fff" font-weight="normal" letter-spacing="0.019">1.11980</text>
<text x="1461.6" y="664.92" font-size="12.5" fill="#fff" font-weight="normal" letter-spacing="0.019">1.11715</text>
<text x="1461.6" y="713.93" font-size="12.5" fill="#fff" font-weight="normal" letter-spacing="0.019">1.11450</text>
<text x="1458.2" y="744.3" font-size="12.5" fill="#fff" font-weight="normal">100</text>
<text x="1458.2" y="775.3" font-size="12.5" fill="#fff" font-weight="normal">75</text>
<text x="1458.2" y="814.0999999999999" font-size="12.5" fill="#fff" font-weight="normal">50</text>
<text x="1458.2" y="853.3" font-size="12.5" fill="#fff" font-weight="normal">25</text>
<rect x="1456" y="171" width="46" height="4" fill="#ff0000" shape-rendering="crispEdges"/>
<rect x="1456" y="175" width="46" height="14" fill="#fff" shape-rendering="crispEdges"/>
<text x="1461.6" y="186.9" font-size="12.5" fill="#000" letter-spacing="-0.11">1.14297</text>
</g>
<text x="28.7" y="64.9" font-size="12.5" fill="#fff" font-weight="normal" letter-spacing="-1.072">EURUSD,H1</text>
<text x="102.6" y="64.9" font-size="12.5" fill="#fff" font-weight="normal" letter-spacing="-0.113">1.14407</text>
<text x="152.1" y="64.9" font-size="12.5" fill="#fff" font-weight="normal" letter-spacing="-0.113">1.14408</text>
<text x="201.4" y="64.9" font-size="12.5" fill="#fff" font-weight="normal" letter-spacing="-0.113">1.14280</text>
<text x="252.2" y="64.9" font-size="12.5" fill="#fff" font-weight="normal" letter-spacing="-0.113">1.14297</text>
<text x="15.5" y="745.8" font-size="12.5" fill="#fff" font-weight="normal" letter-spacing="0.157">Stoch(8,5,3) 81.4139 62.8057</text>
<text x="10.2" y="903.6" font-size="12.5" fill="#fff" font-weight="normal" letter-spacing="-0.138">31 Jan 2022</text>
<text x="106.2" y="903.6" font-size="12.5" fill="#fff" font-weight="normal" letter-spacing="-0.050">31 Jan 15:00</text>
<text x="202.29999999999998" y="903.6" font-size="12.5" fill="#fff" font-weight="normal" letter-spacing="-0.084">1 Feb 03:00</text>
<text x="298.3" y="903.6" font-size="12.5" fill="#fff" font-weight="normal" letter-spacing="-0.084">1 Feb 15:00</text>
<text x="394.3" y="903.6" font-size="12.5" fill="#fff" font-weight="normal" letter-spacing="-0.084">2 Feb 03:00</text>
<text x="490.3" y="903.6" font-size="12.5" fill="#fff" font-weight="normal" letter-spacing="-0.084">2 Feb 15:00</text>
<text x="586.3000000000001" y="903.6" font-size="12.5" fill="#fff" font-weight="normal" letter-spacing="-0.084">3 Feb 03:00</text>
<text x="682.3000000000001" y="903.6" font-size="12.5" fill="#fff" font-weight="normal" letter-spacing="-0.084">3 Feb 15:00</text>
<text x="778.3000000000001" y="903.6" font-size="12.5" fill="#fff" font-weight="normal" letter-spacing="-0.084">4 Feb 03:00</text>
<text x="874.3000000000001" y="903.6" font-size="12.5" fill="#fff" font-weight="normal" letter-spacing="-0.084">4 Feb 15:00</text>
<text x="970.3000000000001" y="903.6" font-size="12.5" fill="#fff" font-weight="normal" letter-spacing="-0.084">7 Feb 03:00</text>
<text x="1066.3" y="903.6" font-size="12.5" fill="#fff" font-weight="normal" letter-spacing="-0.084">7 Feb 15:00</text>
<text x="1162.3" y="903.6" font-size="12.5" fill="#fff" font-weight="normal" letter-spacing="-0.084">8 Feb 03:00</text>
<text x="1258.3" y="903.6" font-size="12.5" fill="#fff" font-weight="normal" letter-spacing="-0.084">8 Feb 15:00</text>
<text x="1354.3" y="903.6" font-size="12.5" fill="#fff" font-weight="normal" letter-spacing="-0.084">9 Feb 03:00</text>
<g opacity="0.615"><text transform="translate(1372.9 894.3) scale(1.16 1)" x="0" y="0" font-size="33" font-weight="900" fill="#fff" stroke="#fff" stroke-width="1" stroke-linejoin="round" letter-spacing="0.62" font-family='"Noto Sans CJK SC","Liberation Sans",sans-serif'>指标铺</text></g>
</svg>
<div id="tb"><svg width="1502" height="48" viewBox="0 0 1502 48" style="position:absolute;left:0;top:0" font-family='"Liberation Sans",sans-serif'><defs><linearGradient id="gold" x1="0" y1="0" x2="1" y2="1"><stop offset="0" stop-color="#fff08a"/><stop offset=".45" stop-color="#f6cc2c"/><stop offset="1" stop-color="#d89c10"/></linearGradient><linearGradient id="grn" x1="0" y1="0" x2="0" y2="1"><stop offset="0" stop-color="#3fe84f"/><stop offset=".55" stop-color="#0fd020"/><stop offset="1" stop-color="#0a9a0a"/></linearGradient><linearGradient id="blu" x1="0" y1="0" x2="0" y2="1"><stop offset="0" stop-color="#6fb4f4"/><stop offset="1" stop-color="#1f62c8"/></linearGradient><radialGradient id="clk" cx=".4" cy=".3" r=".8"><stop offset="0" stop-color="#5aa0f0"/><stop offset="1" stop-color="#154fb0"/></radialGradient><radialGradient id="red" cx=".4" cy=".35" r=".8"><stop offset="0" stop-color="#f2644a"/><stop offset="1" stop-color="#cc2410"/></radialGradient><linearGradient id="cld" x1="0" y1="0" x2="0" y2="1"><stop offset="0" stop-color="#ffffff"/><stop offset="1" stop-color="#c4d0e8"/></linearGradient><linearGradient id="ylw" x1="0" y1="0" x2=".6" y2="1"><stop offset="0" stop-color="#f6d23a"/><stop offset=".55" stop-color="#fff07a"/><stop offset="1" stop-color="#e8b420"/></linearGradient><radialGradient id="grn2" cx=".5" cy=".7" r=".7"><stop offset="0" stop-color="#22e822"/><stop offset="1" stop-color="#0a9a0a"/></radialGradient><pattern id="chk" width="2" height="2" patternUnits="userSpaceOnUse"><rect width="2" height="2" fill="#fff"/><rect width="1" height="1" fill="#f0f0f0"/><rect x="1" y="1" width="1" height="1" fill="#f0f0f0"/></pattern></defs><rect x="10.700" y="20.700" width="15.600" height="16.800" fill="#fdfdfb" stroke="#c9c1ab" stroke-width="1.100"/><path d="M14.500 23v7M13 25.500h1.500M17 24.500v8M22.500 23v6M22.500 24h1.500M19.500 26v7" stroke="#8c8c8c" stroke-width="1.100" fill="none"/><path d="M26.300 36.300L31.300 41" stroke="#9a7212" stroke-width="3.800" stroke-linecap="round"/><path d="M26.300 36.300L31.300 41" stroke="#e6b830" stroke-width="2.200" stroke-linecap="round"/><circle cx="20.900" cy="31.600" r="6.200" fill="#e6f4fc" fill-opacity=".88" stroke="#7fabe2" stroke-width="1.400"/><path d="M19.800 28.500v6M22 28.500v5.500" stroke="#9fb4c8" stroke-width="1.200"/><path d="M40.5 16V44" stroke="#a0a0a0" stroke-width="1" shape-rendering="crispEdges"/><path d="M41.5 16V44" stroke="#fff" stroke-width="1" shape-rendering="crispEdges"/><path d="M53.500 20.900h8l4.600 4.600v10.500q0 1.200-1.200 1.200h-11.400q-1.200 0-1.200-1.200v-13.900q0-1.200 1.200-1.200z" fill="#fff" stroke="#8a8a8a" stroke-width="1.300"/><path d="M61.500 20.900v4.600h4.600z" fill="#dcdcdc" stroke="#8a8a8a" stroke-width="1"/><path d="M54.300 23.800h3.200" stroke="#6c6c6c" stroke-width="1.700"/><path d="M54.300 28.300h6M54.300 30.800h5.400M54.300 33.500h3" stroke="#a2a2a2" stroke-width="1.200"/><path d="M61.600 28.100h5.300v4.900h4.700v5h-4.700v4.700h-5.300v-4.700h-5.200v-5h5.200z" fill="url(#grn)" stroke="#078a07" stroke-width="1"/><path d="M63 29.500h2.500v4.900h4.700" stroke="#8cf58c" stroke-width="1" fill="none" opacity=".8"/><path d="M133.200 32.600L138.600 26.400L140.300 21.300L152.300 30.300L153 33L143.300 39.700Z" fill="#b47a14" stroke="#9a640c" stroke-width=".6"/><path d="M134.300 32.100L139.300 26.600L140.700 22.600L151.300 30.500L143.300 36.900Z" fill="url(#gold)"/><path d="M143.600 38.300L152.300 32.200" stroke="#f3e3a4" stroke-width="1.100"/><path d="M139.600 26.300L141 23" stroke="#fff4b8" stroke-width="1"/><path d="M170 22.300l3.500-2h8.300l1.500 1.500v11h-13.300z" fill="#1f9af4"/><path d="M170 22.300l3.500-2v12.500h-3.500z" fill="#58bcff"/><path d="M173.500 20.300v12" stroke="#d8f0ff" stroke-width=".9"/><rect x="176" y="25.200" width="6" height="2.500" fill="#b4e0ff"/><path d="M171.300 39.800c-4.600 0-5-5.200-1.300-6c.3-3 4.300-3.900 6-1.600c1.500-3.200 7-2.600 7.300 1.300c4.700-.3 5.200 6.300.5 6.300z" fill="url(#cld)" stroke="#5f7fba" stroke-width="1.100"/><g fill="none"><circle cx="210.900" cy="30.200" r="9.500" stroke="#a9b1c1" stroke-width="1.600"/><circle cx="210.900" cy="30.200" r="6.400" stroke="#8f9fbc" stroke-width="1.600"/><circle cx="210.900" cy="30.200" r="3.600" stroke="#7088c8" stroke-width="1.400"/><path d="M203.200 35.700A9.500 9.500 0 0 1 203.600 24" stroke="#5f7cc4" stroke-width="1.600"/></g><path d="M211.500 30.500V40.200A10 10 0 0 0 220.500 32Z" fill="#3fae4a" fill-opacity=".38"/><circle cx="210.900" cy="30" r="2.200" fill="#2453d0"/><path d="M212 31V40.300" stroke="#2fae3c" stroke-width="1.900"/><rect x="230" y="15" width="96" height="29" fill="url(#chk)" shape-rendering="crispEdges"/><path d="M230.5 44V15.5H326" stroke="#a0a0a0" stroke-width="1" fill="none" shape-rendering="crispEdges"/><path d="M325.5 16V43.5H231" stroke="#fff" stroke-width="1" fill="none" shape-rendering="crispEdges"/><path d="M235.100 29.200L254.100 28.100L254.900 31.700L245 40.100L243.200 39.400L235.100 31.700Z" fill="url(#ylw)" stroke="#cf9a12" stroke-width=".9"/><path d="M234.600 27.300c-.6-3 3.500-4.300 5.300-3.700c.6-4.800 8.400-4.600 8.900-.7c2.700-.9 6 .3 5.600 2c-.6 2.500-5.800 4.600-11.200 4.700c-4.600.1-8.200-.8-8.600-2.300z" fill="#4fa9e2" stroke="#3a8ccc" stroke-width=".7"/><path d="M240.300 24.800c.2-5.200 8-5 8.300-.8c-2 1.600-6.200 2-8.300.8z" fill="#7cc4f0"/><path d="M249 27.500l4.200-2.300" stroke="#c4e4f8" stroke-width="1.200"/><circle cx="250.300" cy="34.800" r="5.300" fill="url(#grn2)" stroke="#0a8a0a" stroke-width=".8"/><path d="M248.800 31.800v5.900l4.400-3z" fill="#fff"/><path d="M328.5 14V45" stroke="#b5d2b5" stroke-width="1" shape-rendering="crispEdges"/><path d="M327.5 14V45" stroke="#a8a8a8" stroke-width="1" shape-rendering="crispEdges"/><path d="M331 17.5h4 M331 19.5h4 M331 21.5h4 M331 23.5h4 M331 25.5h4 M331 27.5h4 M331 29.5h4 M331 31.5h4 M331 33.5h4 M331 35.5h4 M331 37.5h4 M331 39.5h4 M331 41.5h4 M331 43.5h4" stroke="#9a9a9a" stroke-width="1" shape-rendering="crispEdges"/><path d="M348 23.5V40M343.5 37.5H360" stroke="#5f5f5f" stroke-width="1.3" fill="none"/><path d="M345.4 25.8L348 22L350.6 25.8Z M358.6 34.9L362.4 37.5L358.6 40.1Z" fill="#5f5f5f"/><path d="M356 25.500V34.500M356 26.500h4M352 33.500h4" stroke="#1f9a2f" stroke-width="1.500" fill="none"/><rect x="371" y="15" width="31" height="29" fill="url(#chk)" shape-rendering="crispEdges"/><path d="M371.5 44V15.5H402" stroke="#a0a0a0" stroke-width="1" fill="none" shape-rendering="crispEdges"/><path d="M401.5 16V43.5H372" stroke="#fff" stroke-width="1" fill="none" shape-rendering="crispEdges"/><path d="M382 23.5V40M377.5 37.5H394" stroke="#5f5f5f" stroke-width="1.3" fill="none"/><path d="M379.4 25.8L382 22L384.6 25.8Z M392.6 34.9L396.4 37.5L392.6 40.1Z" fill="#5f5f5f"/><path d="M389.500 20V35.500" stroke="#138a22" stroke-width="1.300"/><rect x="386.700" y="23.500" width="5.600" height="9.600" rx="1" fill="#2fce3f" stroke="#138a22" stroke-width="1"/><path d="M416 23.5V40M411.5 37.5H428" stroke="#5f5f5f" stroke-width="1.3" fill="none"/><path d="M413.4 25.8L416 22L418.6 25.8Z M426.6 34.9L430.4 37.5L426.6 40.1Z" fill="#5f5f5f"/><path d="M414.500 33.500c3-4 5.500-8 8.500-7.500s4.500 4.500 7.500 5.500" stroke="#1f9a2f" stroke-width="1.700" fill="none"/><path d="M440.5 16V44" stroke="#a0a0a0" stroke-width="1" shape-rendering="crispEdges"/><path d="M441.5 16V44" stroke="#fff" stroke-width="1" shape-rendering="crispEdges"/><path d="M462.5 32.5L469 39" stroke="#9a7418" stroke-width="4.4" stroke-linecap="round"/><path d="M462.5 32.5L469 39" stroke="#f0c63c" stroke-width="2.6" stroke-linecap="round"/><circle cx="458" cy="28" r="6.8" fill="#d6e8fb" stroke="#5b93d6" stroke-width="1.7"/><path d="M454.4 28H461.6" stroke="#2f6fc4" stroke-width="2.2"/><path d="M458 24.4V31.6" stroke="#2f6fc4" stroke-width="2.2"/><path d="M496.5 32.5L503 39" stroke="#9a7418" stroke-width="4.4" stroke-linecap="round"/><path d="M496.5 32.5L503 39" stroke="#f0c63c" stroke-width="2.6" stroke-linecap="round"/><circle cx="492" cy="28" r="6.8" fill="#d6e8fb" stroke="#5b93d6" stroke-width="1.7"/><path d="M488.4 28H495.6" stroke="#2f6fc4" stroke-width="2.2"/><rect x="518" y="20" width="9.800" height="9.600" fill="#58b848" stroke="#2c8a22" stroke-width=".8"/><rect x="520" y="23.6" width="6" height="4" fill="#f4f8ff"/><path d="M519 21.5h2" stroke="#eaf4ff" stroke-width="1"/><rect x="528.6" y="20" width="9.800" height="9.600" fill="#3f7fe8" stroke="#1c4cc0" stroke-width=".8"/><rect x="530.6" y="23.6" width="6" height="4" fill="#f4f8ff"/><path d="M529.6 21.5h2" stroke="#eaf4ff" stroke-width="1"/><rect x="518" y="30.3" width="9.800" height="9.600" fill="#3f7fe8" stroke="#1c4cc0" stroke-width=".8"/><rect x="520" y="33.9" width="6" height="4" fill="#f4f8ff"/><path d="M519 31.8h2" stroke="#eaf4ff" stroke-width="1"/><rect x="528.6" y="30.3" width="9.800" height="9.600" fill="#58b848" stroke="#2c8a22" stroke-width=".8"/><rect x="530.6" y="33.9" width="6" height="4" fill="#f4f8ff"/><path d="M529.6 31.8h2" stroke="#eaf4ff" stroke-width="1"/><path d="M548.5 16V44" stroke="#a0a0a0" stroke-width="1" shape-rendering="crispEdges"/><path d="M549.5 16V44" stroke="#fff" stroke-width="1" shape-rendering="crispEdges"/><rect x="553" y="15" width="31" height="29" fill="url(#chk)" shape-rendering="crispEdges"/><path d="M553.5 44V15.5H584" stroke="#a0a0a0" stroke-width="1" fill="none" shape-rendering="crispEdges"/><path d="M583.5 16V43.5H554" stroke="#fff" stroke-width="1" fill="none" shape-rendering="crispEdges"/><path d="M563 23.5V40M558.5 37.5H575" stroke="#5f5f5f" stroke-width="1.3" fill="none"/><path d="M560.4 25.8L563 22L565.6 25.8Z M573.6 34.9L577.4 37.5L573.6 40.1Z" fill="#5f5f5f"/><path d="M569.500 24.500l5.500 4.500l-5.500 4.500z" fill="#8fe08f" stroke="#1f9a2f" stroke-width="1.300"/><path d="M597 23.5V40M592.5 37.5H609" stroke="#5f5f5f" stroke-width="1.3" fill="none"/><path d="M594.4 25.8L597 22L599.6 25.8Z M607.6 34.9L611.4 37.5L607.6 40.1Z" fill="#5f5f5f"/><path d="M605.500 22.500V35" stroke="#2f6fc4" stroke-width="1.500"/><path d="M607 29.300h6M610.500 26l-3.800 3.300l3.800 3.300z" stroke="#d8481c" stroke-width="1.200" fill="#d8481c"/><path d="M622.5 16V44" stroke="#a0a0a0" stroke-width="1" shape-rendering="crispEdges"/><path d="M623.5 16V44" stroke="#fff" stroke-width="1" shape-rendering="crispEdges"/><path d="M633.500 20.500h9l5 5v11h-14z" fill="#fbfbfb" stroke="#8e8e8e"/><path d="M642.500 20.500v5h5" fill="#e4e4e4" stroke="#8e8e8e"/><path d="M640.500 24c-2-.8-3 .2-3 2v7M636 28.500h3.500" stroke="#555" stroke-width="1.300" fill="none"/><path d="M644 27.500h5v5h5v5h-5v5h-5v-5h-5v-5h5z" fill="url(#grn)" stroke="#0a7e0a" stroke-width="1"/><path d="M658 29h7.4l-3.7 4z" fill="#000"/><circle cx="689" cy="30" r="9.800" fill="url(#clk)" stroke="#123f96" stroke-width=".8"/><circle cx="689" cy="30" r="6.400" fill="#f2f6fc" stroke="#9bb6dc" stroke-width=".6"/><path d="M689 25.500V30.500H693" stroke="#444" stroke-width="1.400" fill="none"/><path d="M689 24v1M689 35v1M683.500 30h1M694 30h1" stroke="#8a8a8a" stroke-width="1"/><path d="M705 29h7.4l-3.7 4z" fill="#000"/><rect x="726" y="21.500" width="20" height="17.500" fill="#fff" stroke="#3b78d2" stroke-width="1.400"/><rect x="726" y="21.500" width="20" height="3.400" fill="#4a8ae0"/><path d="M726 31.500h20" stroke="#4a8ae0" stroke-width="1.200"/><path d="M729 29l3-1.500l3 .8l3-2l3 1l2.500-1.500" stroke="#b0381c" stroke-width="1.400" fill="none"/><path d="M729 36.500l3-1.500l3 1l3-2.500l3 2l2.500-.500" stroke="#2c9a34" stroke-width="1.400" fill="none"/><path d="M752 29h7.4l-3.7 4z" fill="#000"/><path d="M768.5 14V45" stroke="#b5d2b5" stroke-width="1" shape-rendering="crispEdges"/><path d="M767.5 14V45" stroke="#a8a8a8" stroke-width="1" shape-rendering="crispEdges"/><path d="M771 17.5h4 M771 19.5h4 M771 21.5h4 M771 23.5h4 M771 25.5h4 M771 27.5h4 M771 29.5h4 M771 31.5h4 M771 33.5h4 M771 35.5h4 M771 37.5h4 M771 39.5h4 M771 41.5h4 M771 43.5h4" stroke="#9a9a9a" stroke-width="1" shape-rendering="crispEdges"/><rect x="777" y="15" width="31" height="29" fill="url(#chk)" shape-rendering="crispEdges"/><path d="M777.5 44V15.5H808" stroke="#a0a0a0" stroke-width="1" fill="none" shape-rendering="crispEdges"/><path d="M807.5 16V43.5H778" stroke="#fff" stroke-width="1" fill="none" shape-rendering="crispEdges"/><path d="M787.200 21.300V35.600L790.600 32.800L793.400 39.300L796.200 38.100L793.400 31.700L797.800 31.300Z" fill="#4f4f4f"/><path d="M826.700 21V29.400M826.700 32V40.400M817 30.700H825.400M828 30.700H836.700" stroke="#5f5f5f" stroke-width="1.400"/><rect x="826.200" y="30.200" width="1" height="1" fill="#b0b0b0"/><path d="M846.5 16V44" stroke="#a0a0a0" stroke-width="1" shape-rendering="crispEdges"/><path d="M847.5 16V44" stroke="#fff" stroke-width="1" shape-rendering="crispEdges"/><path d="M866.800 23V39" stroke="#5f5f5f" stroke-width="1.600"/><path d="M894 30.700H909" stroke="#5f5f5f" stroke-width="1.600"/><path d="M927.600 38.800L943.400 23.800" stroke="#5f5f5f" stroke-width="1.600"/><path d="M959 32.300L969.600 22.300M965.600 39L977.300 28" stroke="#5f5f5f" stroke-width="1.500" fill="none"/><path d="M961.300 37.600L967.200 27.300M965.800 37.200L971.800 24.300M970.300 32.800L975.600 20.600M960 35.300l3.200 2M973.800 21.800l3.200 4.200" stroke="#5f5f5f" stroke-width="1.250" fill="none"/><text x="972.800" y="41.700" font-size="9" font-weight="bold" fill="#505050" textLength="5.600" lengthAdjust="spacingAndGlyphs">E</text><path d="M994.300 22h17M994.300 26h17M994.300 31h17M994.300 36h12" stroke="#5f5f5f" stroke-width="1.900" stroke-dasharray="1.300 1.400"/><text x="1007.200" y="41.700" font-size="9" font-weight="bold" fill="#505050" textLength="5.200" lengthAdjust="spacingAndGlyphs">F</text><text x="1032" y="37" font-size="16.700" font-weight="bold" fill="#666" textLength="10.200" lengthAdjust="spacingAndGlyphs">A</text><rect x="1064" y="22.300" width="14.500" height="16.500" fill="none" stroke="#5f5f5f" stroke-width="1.200" stroke-dasharray="1.300 1.500"/><text x="1066.200" y="36.200" font-size="14" font-weight="bold" fill="#5f5f5f">T</text><path d="M1100.500 22.300l4 4.200l-4 3.600l-4-3.600z M1110.500 31.500l4 3.700l-4 4.100l-4-4.100z" fill="#5f5f5f"/><path d="M1100.500 31.500l2.800 3l5.200-7.500" stroke="#5f5f5f" stroke-width="1.700" fill="none"/><path d="M1119.7 29h7.4l-3.7 4z" fill="#000"/><path d="M1136.5 14V45" stroke="#b5d2b5" stroke-width="1" shape-rendering="crispEdges"/><path d="M1135.5 14V45" stroke="#a8a8a8" stroke-width="1" shape-rendering="crispEdges"/><path d="M1139 17.5h4 M1139 19.5h4 M1139 21.5h4 M1139 23.5h4 M1139 25.5h4 M1139 27.5h4 M1139 29.5h4 M1139 31.5h4 M1139 33.5h4 M1139 35.5h4 M1139 37.5h4 M1139 39.5h4 M1139 41.5h4 M1139 43.5h4" stroke="#9a9a9a" stroke-width="1" shape-rendering="crispEdges"/><rect x="1281" y="15" width="31" height="29" fill="url(#chk)" shape-rendering="crispEdges"/><path d="M1281.5 44V15.5H1312" stroke="#a0a0a0" stroke-width="1" fill="none" shape-rendering="crispEdges"/><path d="M1311.5 16V43.5H1282" stroke="#fff" stroke-width="1" fill="none" shape-rendering="crispEdges"/><path d="M1451.500 36L1457 30.500" stroke="#2a5fc0" stroke-width="3" stroke-linecap="round"/><circle cx="1461.200" cy="26.300" r="4.900" fill="#eef4fc" stroke="#3f74cf" stroke-width="1.900"/><path d="M1483 33.500c0-8 14-8 14 0c0 4-4 5.500-8 5.500l-3.500 2.500l.8-3c-2-.8-3.300-2.500-3.300-5z" fill="#eceef2" stroke="#a9adb6" stroke-width="1.200"/><circle cx="1499" cy="26.700" r="8.700" fill="url(#red)"/><text x="1496.600" y="32" font-size="14" fill="#fff">1</text></svg><span class="tl" style="left:75.7px;top:20.7px;letter-spacing:2px">新订单</span><span class="tl" style="left:260.8px;top:20.9px;letter-spacing:1.5px">自动交易</span><span class="tf" style="left:1160.2px">M1</span><span class="tf" style="left:1194.4px">M5</span><span class="tf" style="left:1228.8px">M15</span><span class="tf" style="left:1262.9px">M30</span><span class="tf" style="left:1296.7px">H1</span><span class="tf" style="left:1330px">H4</span><span class="tf" style="left:1365px">D1</span><span class="tf" style="left:1399.8px">W1</span><span class="tf" style="left:1422.8px;width:14.4px;margin-left:0;text-align:left;overflow:hidden">MN</span></div>

<div id="tp">
<div class="tri"></div>
<div class="bs" style="left:14px;width:67px"><span style="left:17.4px">SELL</span><i style="left:4px;width:60px"></i></div>
<div class="bs" style="left:230px;width:67px"><span style="left:18.8px;letter-spacing:-0.4px">BUY</span><i style="left:4px;width:60px"></i></div>
<div class="vol"><div class="vb" style="left:1px"><b class="dn"></b></div><div class="vf">0.10</div><div class="vb" style="left:120px;width:24px"><b class="up"></b></div></div>
<div class="pr" style="left:14px;width:141px"><span class="sm" style="left:26px">1.14</span><span class="bg" style="left:61.6px">29</span><span class="su" style="left:110.6px">7</span></div>
<div class="pr" style="left:157px;width:140px"><span class="sm" style="left:25.5px">1.14</span><span class="bg" style="left:61.6px">31</span><span class="su" style="left:110.6px">6</span></div>
</div>
</body></html>
